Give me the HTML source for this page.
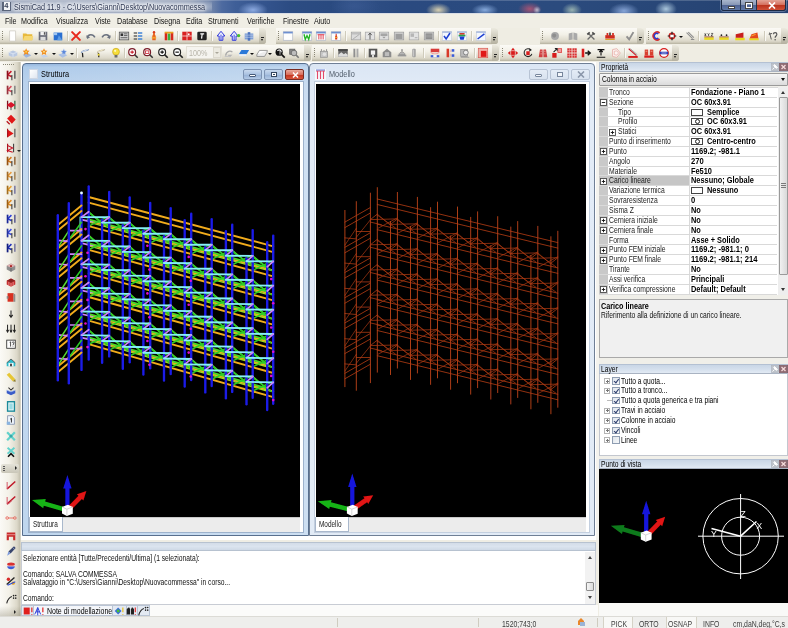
<!DOCTYPE html>
<html><head><meta charset="utf-8"><title>SismiCad</title>
<style>
*{box-sizing:border-box;margin:0;padding:0}
html,body{width:788px;height:628px;overflow:hidden;background:#f0efe8;font-family:"Liberation Sans",sans-serif;font-size:9px;color:#000}
.abs{position:absolute}
#root{position:absolute;left:0;top:0;width:788px;height:628px;overflow:hidden;background:#efede4;filter:blur(.35px)}
/* title bar */
#title{left:0;top:0;width:788px;height:13px;background:linear-gradient(90deg,#a5afc2 0px,#a3adc1 120px,#98a4ba 190px,#7a8cae 208px,#4d6aa0 222px,#3f5f98 235px,#34548e 262px,#2c4c83 290px,#2a4a80 330px,#305086 350px,#2a4a80 400px,#2b4b7e 560px,#274575 700px,#24406e 788px);overflow:hidden}
#title .t{left:14px;top:1.5px;font-size:9.2px;color:#2a3450;white-space:nowrap;text-shadow:0 0 3px #fff,0 0 4px #fff,0 0 5px #fff;transform-origin:0 50%;transform:scaleX(.79)}
/* menu */
#menu{left:0;top:14px;width:788px;height:14px;background:#f0eee5}
#menu span{position:absolute;top:2px;font-size:9.3px;white-space:nowrap;color:#111;transform-origin:0 50%;transform:scaleX(.77)}
/* toolbars */
.strip{position:absolute;height:16px;background:linear-gradient(180deg,#fbfaf6 0%,#f3f1e8 40%,#dcd8c9 82%,#c6c2b1 94%,#b3af9d 100%);border-radius:0 3px 3px 0}
.strip .end{position:absolute;right:0;top:0;width:7px;height:16px;background:linear-gradient(180deg,#eceadf,#b5b1a0);border-radius:0 3px 3px 0}
.strip .end:after{content:"";position:absolute;left:2px;top:11px;border-left:1.7px solid transparent;border-right:1.7px solid transparent;border-top:2.2px solid #111}
.strip .end:before{content:"";position:absolute;left:2px;top:8.5px;width:3.4px;height:1px;background:#222}
.grip{position:absolute;top:3px;width:1px;height:10px;background:repeating-linear-gradient(180deg,#8a8776 0 1px,transparent 1px 2px)}
.sep{position:absolute;top:3px;width:1px;height:10px;background:#cfcbbb;box-shadow:1px 0 0 #faf9f5}
.ic{position:absolute;width:12px;height:12px;top:2px;filter:blur(.3px)}
.ic svg{position:absolute;left:0;top:0;width:12px;height:12px;overflow:visible}
.dd{position:absolute;top:8px;width:0;height:0;border-left:2px solid transparent;border-right:2px solid transparent;border-top:2.5px solid #111}
/* left toolbar */
#ltb{left:0;top:62px;width:21px;height:555px;background:linear-gradient(180deg,rgba(0,0,0,0) 0,rgba(0,0,0,0) 544px,rgba(120,115,95,.35) 555px),linear-gradient(90deg,#fbfaf6 0px,#f3f1e8 9px,#dcd8c9 17px,#c4c0af 20px,#e9e7de 21px)}
#ltb .ic{left:5px}
/* mdi */
#mdi{left:21px;top:62px;width:577px;height:478px;background:#fff}
.win{position:absolute;border:1px solid #5a6f8a;border-radius:4px 4px 0 0}
.win .cap{position:absolute;left:0;top:0;right:0;height:20px}
.win .cap .tt{position:absolute;left:18px;top:5px;font-size:9.2px;white-space:nowrap}
.win .client{position:absolute;background:#000;overflow:hidden}
.win .inner{position:absolute;background:#fff;border:1px solid #8fa4bf}
.wbtn{position:absolute;top:5px;height:10.5px;width:18.5px;border:1px solid #7d93b3;border-radius:2px}
.tab{position:absolute;background:#fff;font-size:8.6px;border:1px solid #a9b8cc;border-top:none}
/* panels */
.phead{position:absolute;height:10px;background:linear-gradient(180deg,#c9d6e6,#d6e1ee 60%,#e2eaf4);border:1px solid #b4c1d3;border-bottom-color:#a9b3c2;font-size:8.6px;line-height:8px;padding-left:1px;white-space:nowrap}
.phead i{position:absolute;top:0px;width:8px;height:8px;font-style:normal}
.prow{position:absolute;left:0;width:178px;height:9.84px;border-bottom:1px solid #d9d9d9;font-size:8.6px;line-height:9px;white-space:nowrap}
.prow .n{position:absolute;left:10px;top:0;color:#222;transform-origin:0 50%;transform:scaleX(.79)}
.prow .v{position:absolute;left:92px;top:0;font-weight:bold;color:#000;transform-origin:0 50%;transform:scaleX(.86)}
.prow .e{position:absolute;left:2px;top:2px;width:6px;height:6px;border:1px solid #555;background:#fff}
.prow .e:before{content:"";position:absolute;left:1px;top:1.5px;width:2px;height:1px;background:#000}
.prow .e.p:after{content:"";position:absolute;left:1.5px;top:1px;width:1px;height:2px;background:#000}
.prow .bx{position:absolute;left:92px;top:1px;width:12px;height:7px;border:1px solid #444;background:#fff}
.lrow{position:absolute;left:0;height:10px;font-size:8.6px;line-height:10px;white-space:nowrap}
.lrow .e{position:absolute;left:4px;top:2.5px;width:6px;height:6px;border:1px solid #b4b4b4;background:#fff}
.lrow .e:before{content:"";position:absolute;left:0.5px;top:1.5px;width:3px;height:1px;background:#777}
.lrow .e:after{content:"";position:absolute;left:1.5px;top:0.5px;width:1px;height:3px;background:#777}
.lrow .cb{position:absolute;left:12px;top:1.5px;width:7.5px;height:7.5px;border:1px solid #8e9db2;background:linear-gradient(135deg,#dfe5ec,#f6f8fa)}
.lrow .cb.c:after{content:"";position:absolute;left:1.5px;top:0px;width:1.8px;height:3.6px;border-right:1.2px solid #2c3c6c;border-bottom:1.2px solid #2c3c6c;transform:rotate(38deg)}
.lrow .t{position:absolute;left:20.8px;top:0;transform-origin:0 50%;transform:scaleX(.775)}
/* status */
#status{left:0;top:616px;width:788px;height:12px;background:#eeeeec;border-top:1px solid #dcdbd6;font-size:8.6px}
#status span{position:absolute;top:1.5px;color:#3c3c3c;white-space:nowrap;transform-origin:0 50%;transform:scaleX(.8)}

.sx{display:inline-block;white-space:nowrap;transform-origin:0 50%;transform:scaleX(.78)}
.sxb{display:inline-block;white-space:nowrap;transform-origin:0 50%;transform:scaleX(.86);font-weight:bold}
.win .cap .tt{transform-origin:0 50%;transform:scaleX(.8)}
.tab span{display:inline-block;transform-origin:0 50%;transform:scaleX(.75);color:#222}

</style></head>
<body>
<div id="root">
<svg width="0" height="0" style="position:absolute"><defs><filter id="soft" x="-10%" y="-10%" width="120%" height="120%"><feGaussianBlur stdDeviation="0.45"/></filter><filter id="soft2" x="-5%" y="-5%" width="110%" height="110%"><feGaussianBlur stdDeviation="0.4"/></filter><filter id="soft3" x="-5%" y="-5%" width="110%" height="110%"><feGaussianBlur stdDeviation="0.3"/></filter></defs></svg>
<!-- TITLE BAR -->
<div id="title" class="abs">
  <div class="abs" style="left:238px;top:2px;width:30px;height:16px;background:radial-gradient(ellipse at center,rgba(140,170,225,1),rgba(135,165,220,0) 70%)"></div>
  <div class="abs" style="left:330px;top:-4px;width:50px;height:20px;background:radial-gradient(ellipse at center,rgba(70,100,160,.35),rgba(70,100,160,0) 70%)"></div>
  <div class="abs" style="left:426px;top:3px;width:25px;height:14px;background:radial-gradient(ellipse at center,rgba(225,215,180,.95),rgba(225,215,180,0) 70%)"></div>
  <div class="abs" style="left:472px;top:4px;width:26px;height:12px;background:radial-gradient(ellipse at center,rgba(145,180,230,.9),rgba(145,180,230,0) 72%)"></div>
  <div class="abs" style="left:518px;top:2px;width:24px;height:14px;background:radial-gradient(ellipse at center,rgba(185,85,115,.85),rgba(185,85,115,0) 70%)"></div>
  <div class="abs" style="left:533px;top:6px;width:8px;height:8px;background:radial-gradient(ellipse at center,rgba(230,230,240,.7),rgba(230,230,240,0) 70%)"></div>
  <div class="abs" style="left:562px;top:3px;width:20px;height:14px;background:radial-gradient(ellipse at center,rgba(170,195,185,.85),rgba(170,195,185,0) 70%)"></div>
  <div class="abs" style="left:609px;top:3px;width:30px;height:16px;background:radial-gradient(ellipse at center,rgba(135,165,215,1),rgba(125,155,205,0) 70%)"></div>
  <div class="abs" style="left:655px;top:1px;width:22px;height:16px;background:radial-gradient(ellipse at center,rgba(170,198,220,1),rgba(150,180,205,0) 70%)"></div>
  <div class="abs" style="left:0;top:0;width:788px;height:1px;background:rgba(255,255,255,.18)"></div>
  <div class="abs" style="left:8px;top:1px;width:204px;height:11px;background:radial-gradient(ellipse at center,rgba(222,227,236,.75) 0%,rgba(205,212,224,.5) 60%,rgba(190,198,213,0) 100%)"></div>
  <!-- app icon -->
  <div class="abs" style="left:2px;top:2px;width:9px;height:9px;background:#59647a"></div>
  <div class="abs" style="left:3.5px;top:2px;width:6px;height:8px;background:#f2f4f8"></div>
  <div class="abs" style="left:4.2px;top:2.2px;color:#39435a;font-size:7.5px;line-height:8px;font-weight:bold">4</div>
  <div class="t abs">SismiCad 11.9 - C:\Users\Gianni\Desktop\Nuovacommessa</div>
  <!-- caption buttons -->
  <div class="abs" style="left:721px;top:0;width:65px;height:10.5px;border:1px solid #1c2a44;border-top:none;border-radius:0 0 3px 3px;overflow:hidden;box-shadow:0 0 0 1px rgba(200,215,240,.35)">
    <div class="abs" style="left:0;top:0;width:19px;height:11px;background:linear-gradient(180deg,#a9b6cd 0%,#8797b5 45%,#506494 50%,#6480ae 100%);border-right:1px solid #26344d"></div>
    <div class="abs" style="left:19px;top:0;width:16px;height:11px;background:linear-gradient(180deg,#a9b6cd 0%,#8797b5 45%,#506494 50%,#6480ae 100%);border-right:1px solid #26344d"></div>
    <div class="abs" style="left:35px;top:0;width:30px;height:11px;background:linear-gradient(180deg,#e3a496 0%,#d46e5c 45%,#bb341e 50%,#d4573d 100%)"></div>
    <div class="abs" style="left:6px;top:6px;width:7px;height:2.5px;background:#fff;border:0.5px solid #444"></div>
    <div class="abs" style="left:24px;top:2.5px;width:6px;height:5px;border:1.3px solid #fff;outline:0.5px solid #444"></div>
    <svg class="abs" style="left:46px;top:2px" width="8" height="7" viewBox="0 0 8 7"><path d="M1,0.5L7,6.5M7,0.5L1,6.5" stroke="#fff" stroke-width="1.7"/></svg>
  </div>
</div>
<div class="abs" style="left:0;top:13px;width:788px;height:1px;background:#d9dde5"></div>
<!-- MENU -->
<div id="menu" class="abs">
<span style="left:4.5px">File</span>
<span style="left:20.5px">Modifica</span>
<span style="left:56px">Visualizza</span>
<span style="left:94.5px">Viste</span>
<span style="left:116.5px">Database</span>
<span style="left:153.5px">Disegna</span>
<span style="left:186px">Edita</span>
<span style="left:208px">Strumenti</span>
<span style="left:246.5px">Verifiche</span>
<span style="left:283px">Finestre</span>
<span style="left:313.5px">Aiuto</span>
</div>
<!-- TOOLBARS -->
<div class="abs" style="left:0;top:28px;width:788px;height:34px;background:#efede3"></div>
<div class="strip" style="left:0px;top:28px;width:266px">
<div class="grip" style="left:2px"></div>
<div class="ic" style="left:6.5px;top:2px"><svg viewBox="0 0 14 14"><path d="M3,1H10V13H3Z" fill="#fff" stroke="#c9c6bb" stroke-width="0.8"/></svg></div>
<div class="ic" style="left:21.6px;top:2px"><svg viewBox="0 0 14 14"><path d="M1,4H5L6,5H12V12H1Z" fill="#e8b93c"/><path d="M1,12L3,7H13L12,12Z" fill="#f6d873"/></svg></div>
<div class="ic" style="left:36.7px;top:2px"><svg viewBox="0 0 14 14"><path d="M2,2H12V12H2Z" fill="#6c6e7a"/><rect x="4" y="2" width="6" height="4" fill="#f2f2f2"/><rect x="4" y="8" width="6" height="4" fill="#dcdcdc"/><rect x="8" y="2.5" width="1.5" height="3" fill="#555"/></svg></div>
<div class="ic" style="left:51.8px;top:2px"><svg viewBox="0 0 14 14"><rect x="2" y="3" width="10" height="9" fill="#2a6fd0"/><rect x="2" y="3" width="4" height="3" fill="#9ec4f0"/><path d="M8,6L12,12H6Z" fill="#5d9be4"/></svg></div>
<div class="sep" style="left:67.0px"></div>
<div class="ic" style="left:70.0px;top:2px"><svg viewBox="0 0 14 14"><path d="M2.5,2.5L11.5,11.5M11.5,2.5L2.5,11.5" stroke="#e8281c" stroke-width="2.4" stroke-linecap="round"/></svg></div>
<div class="ic" style="left:85.0px;top:2px"><svg viewBox="0 0 14 14"><path d="M2.5,9C3.5,4.5 9.5,4.5 11.5,8.5" stroke="#6b7280" stroke-width="1.8" fill="none"/><path d="M1.5,6L2.5,10.5L6,8.5Z" fill="#6b7280"/></svg></div>
<div class="ic" style="left:100.0px;top:2px"><svg viewBox="0 0 14 14"><path d="M11.5,9C10.5,4.5 4.5,4.5 2.5,8.5" stroke="#6b7280" stroke-width="1.8" fill="none"/><path d="M12.5,6L11.5,10.5L8,8.5Z" fill="#6b7280"/></svg></div>
<div class="sep" style="left:115.0px"></div>
<div class="ic" style="left:118.0px;top:2px"><svg viewBox="0 0 14 14"><rect x="1.5" y="2.5" width="11" height="9" fill="#d4d4d4" stroke="#555" stroke-width="0.9"/><rect x="3" y="4" width="3" height="3" fill="#333"/><path d="M7,4.5H11M7,6.5H11M3,9H11" stroke="#444" stroke-width="0.9"/></svg></div>
<div class="ic" style="left:132.4px;top:2px"><svg viewBox="0 0 14 14"><path d="M2,3.5H6M2,7H6M2,10.5H6" stroke="#222" stroke-width="1.4"/><path d="M7,3.5H12M7,7H12M7,10.5H12" stroke="#3f83d8" stroke-width="1.6"/></svg></div>
<div class="ic" style="left:148.0px;top:2px"><svg viewBox="0 0 14 14"><path d="M5,12V7L6,5V2H8V5L9,7V12Z" fill="#e8641c"/><rect x="4.5" y="8" width="5" height="2" fill="#f2a032"/><circle cx="7" cy="2.5" r="1.4" fill="#d63a1c"/></svg></div>
<div class="ic" style="left:162.6px;top:2px"><svg viewBox="0 0 14 14"><rect x="2" y="3" width="3" height="9" fill="#d8281c"/><rect x="5.5" y="4" width="3" height="8" fill="#3bb33b"/><rect x="9" y="3" width="3" height="9" fill="#d8281c"/><rect x="2" y="2" width="10" height="2" fill="#e8a020"/></svg></div>
<div class="sep" style="left:177.0px"></div>
<div class="ic" style="left:181.0px;top:2px"><svg viewBox="0 0 14 14"><rect x="1.5" y="2" width="11" height="10" fill="#d82020"/><path d="M7,2V12M1.5,7H12.5" stroke="#fff" stroke-width="0.8"/><rect x="8" y="4" width="2" height="2" fill="#fff"/></svg></div>
<div class="ic" style="left:196.0px;top:2px"><svg viewBox="0 0 14 14"><rect x="1.5" y="2" width="11" height="10" rx="1.5" fill="#222"/><path d="M5,4.5H9.5M7.2,4.5L6.5,10" stroke="#fff" stroke-width="1.4"/></svg></div>
<div class="sep" style="left:210.5px"></div>
<div class="ic" style="left:214.5px;top:2px"><svg viewBox="0 0 14 14"><path d="M7,1.5L11.5,7H9.2V12H4.8V7H2.5Z" fill="#e6ebff" stroke="#2a32d8" stroke-width="1.1"/><path d="M7,5.5V12" stroke="#2a32d8" stroke-width="1"/></svg></div>
<div class="ic" style="left:228.7px;top:2px"><svg viewBox="0 0 14 14"><path d="M6,1.5L10.5,7H8.2V12H3.8V7H1.5Z" fill="#e6ebff" stroke="#2a32d8" stroke-width="1.1"/><path d="M6,5.5V12" stroke="#2a32d8" stroke-width="1"/><circle cx="11.3" cy="6.5" r="1.9" fill="#46c02a"/></svg></div>
<div class="ic" style="left:243.0px;top:2px"><svg viewBox="0 0 14 14"><rect x="2" y="4" width="10" height="7" fill="#7f9fd6"/><rect x="5.5" y="2.5" width="3" height="10" fill="#4d74be"/><path d="M2,6H12M2,8.5H12" stroke="#c9d7ef" stroke-width="0.7"/></svg></div>
<div class="end"></div>
</div>
<div class="strip" style="left:276px;top:28px;width:222px">
<div class="grip" style="left:2px"></div>
<div class="ic" style="left:5.7px;top:2px"><svg viewBox="0 0 14 14"><rect x="1.5" y="2" width="11" height="10" fill="#fdfdfd" stroke="#b3b9c6" stroke-width="0.8"/><rect x="1.5" y="2" width="11" height="2" fill="#6d8fd0"/></svg></div>
<div class="ic" style="left:25.0px;top:2px"><svg viewBox="0 0 14 14"><rect x="1.5" y="2" width="11" height="10" fill="#fdfdfd" stroke="#b3b9c6" stroke-width="0.8"/><rect x="1.5" y="2" width="11" height="2" fill="#6d8fd0"/><path d="M3.5,5L5,11L7,6.5L9,11L10.5,5" stroke="#22b422" stroke-width="1.6" fill="none"/></svg></div>
<div class="ic" style="left:39.0px;top:2px"><svg viewBox="0 0 14 14"><rect x="1.5" y="2" width="11" height="10" fill="#fdfdfd" stroke="#b3b9c6" stroke-width="0.8"/><rect x="1.5" y="2" width="11" height="2" fill="#6d8fd0"/><path d="M3,5.5H11M4.5,5.5V11M7,5.5V11M9.5,5.5V11" stroke="#e03a4a" stroke-width="1.1" fill="none"/></svg></div>
<div class="ic" style="left:54.0px;top:2px"><svg viewBox="0 0 14 14"><rect x="1.5" y="2" width="11" height="10" fill="#fdfdfd" stroke="#b3b9c6" stroke-width="0.8"/><rect x="1.5" y="2" width="11" height="2" fill="#6d8fd0"/><path d="M6,11V7.5L6.6,6V4.5H7.8V6L8.4,7.5V11Z" fill="#d8301c"/><rect x="5.8" y="8" width="2.8" height="1.4" fill="#efa52e"/></svg></div>
<div class="sep" style="left:68.7px"></div>
<div class="ic" style="left:73.6px;top:2px"><svg viewBox="0 0 14 14"><rect x="1.5" y="2.5" width="11" height="9" fill="#dcdcdc" stroke="#9b9b9b" stroke-width="0.8"/><path d="M2,4.5H12M3,11L11,5" stroke="#a9a9a9" stroke-width="1"/></svg></div>
<div class="ic" style="left:88.0px;top:2px"><svg viewBox="0 0 14 14"><rect x="1.5" y="2.5" width="11" height="9" fill="#e4e4e4" stroke="#a3a3a3" stroke-width="0.8"/><path d="M7,11V4M5,6L7,3.5L9,6" stroke="#555" stroke-width="1.1" fill="none"/></svg></div>
<div class="ic" style="left:102.0px;top:2px"><svg viewBox="0 0 14 14"><rect x="1.5" y="2.5" width="11" height="9" fill="#dedede" stroke="#a3a3a3" stroke-width="0.8"/><rect x="3" y="4" width="8" height="3" fill="#a5a5a5"/><path d="M5,8L7,10L9,8" fill="#9a9a9a"/></svg></div>
<div class="ic" style="left:117.4px;top:2px"><svg viewBox="0 0 14 14"><rect x="1.5" y="2.5" width="11" height="9" fill="#cfcfcf" stroke="#9a9a9a" stroke-width="0.8"/><rect x="3" y="4.5" width="8" height="6" fill="#9d9d9d"/></svg></div>
<div class="ic" style="left:131.6px;top:2px"><svg viewBox="0 0 14 14"><rect x="1.5" y="2.5" width="11" height="9" fill="#e2e2e2" stroke="#a7a7a7" stroke-width="0.8"/><rect x="3" y="4" width="4" height="4" fill="#b5b5b5"/><path d="M8,9H11" stroke="#a5a5a5"/></svg></div>
<div class="ic" style="left:146.7px;top:2px"><svg viewBox="0 0 14 14"><rect x="1.5" y="2.5" width="11" height="9" fill="#cdcdcd" stroke="#9a9a9a" stroke-width="0.8"/><rect x="3" y="4" width="8" height="6.5" fill="#8d8d8d"/><path d="M3,6H11M3,8H11" stroke="#b9b9b9" stroke-width="0.6"/></svg></div>
<div class="sep" style="left:162.0px"></div>
<div class="ic" style="left:165.0px;top:2px"><svg viewBox="0 0 14 14"><rect x="1.5" y="2" width="11" height="10" fill="#f4f7fd" stroke="#c0c9da" stroke-width="0.7"/><path d="M1.5,2.5H12.5" stroke="#7c98d0" stroke-width="1"/><path d="M3.5,7L6,10.5L10.5,3.5" stroke="#1d3fd0" stroke-width="1.8" fill="none"/></svg></div>
<div class="ic" style="left:180.0px;top:2px"><svg viewBox="0 0 14 14"><rect x="1.5" y="2" width="11" height="10" fill="#f4f7fd" stroke="#c0c9da" stroke-width="0.7"/><path d="M1.5,2.5H12.5" stroke="#7c98d0" stroke-width="1"/><rect x="4" y="3.5" width="6" height="2" fill="#d43a2c"/><rect x="3" y="5.5" width="8" height="2" fill="#2aa44a"/><path d="M4,7.5H10L9,11.5H5Z" fill="#1d3fd0"/></svg></div>
<div class="sep" style="left:194.5px"></div>
<div class="ic" style="left:199.4px;top:2px"><svg viewBox="0 0 14 14"><rect x="1.5" y="2" width="11" height="10" fill="#f4f7fd" stroke="#c0c9da" stroke-width="0.7"/><path d="M1.5,2.5H12.5" stroke="#7c98d0" stroke-width="1"/><path d="M3,10.5L11,4.5" stroke="#1d3fd0" stroke-width="1.8"/></svg></div>
<div class="end"></div>
</div>
<div class="strip" style="left:540px;top:28px;width:104px">
<div class="grip" style="left:2px"></div>
<div class="ic" style="left:8.5px;top:2px"><svg viewBox="0 0 14 14"><circle cx="7" cy="7" r="4.6" fill="#a9a9a9"/><circle cx="6" cy="6.5" r="2.4" fill="#8e8e8e"/></svg></div>
<div class="ic" style="left:27.0px;top:2px"><svg viewBox="0 0 14 14"><path d="M2,4L6.5,3V11L2,12ZM7.5,3L12,4V12L7.5,11Z" fill="#a9a9a9"/></svg></div>
<div class="ic" style="left:45.4px;top:2px"><svg viewBox="0 0 14 14"><path d="M3,11L10,4M11,11L4,4" stroke="#6c6c6c" stroke-width="1.5"/><path d="M2,4.5L5,2L6,3.5L3.5,6ZM12,4.5L9,2L8,3.5L10.5,6Z" fill="#4a4a4a"/></svg></div>
<div class="ic" style="left:63.5px;top:2px"><svg viewBox="0 0 14 14"><rect x="1.5" y="6" width="11" height="4" fill="#d02a20"/><rect x="3" y="3.5" width="2" height="3" fill="#d02a20"/><rect x="6" y="3" width="2" height="3.5" fill="#444"/><rect x="9.5" y="3.5" width="2" height="3" fill="#d02a20"/><path d="M1.5,11H12.5" stroke="#d8a020" stroke-width="1.2"/></svg></div>
<div class="ic" style="left:83.8px;top:2px"><svg viewBox="0 0 14 14"><path d="M3,7.5L6,11L11,2.5" stroke="#8f8f8f" stroke-width="2.2" fill="none"/></svg></div>
<div class="end"></div>
</div>
<div class="strip" style="left:646px;top:28px;width:142px">
<div class="grip" style="left:2px"></div>
<div class="ic" style="left:5.0px;top:2px"><svg viewBox="0 0 14 14"><path d="M10,3.5A4.5,4.5 0 1 0 10,10.5" stroke="#d42a2a" stroke-width="2" fill="none"/><path d="M8.5,4.5A3,3 0 1 0 8.5,9.5" stroke="#2a3cd4" stroke-width="1.6" fill="none"/></svg></div>
<div class="ic" style="left:19.6px;top:2px"><svg viewBox="0 0 14 14"><circle cx="7" cy="7" r="4" fill="#d02020"/><path d="M2,7H12M7,2V12" stroke="#222" stroke-width="1.4"/><rect x="5" y="5.5" width="4" height="3" fill="#fff"/></svg></div>
<div class="dd" style="left:33.0px"></div>
<div class="ic" style="left:38.0px;top:2px"><svg viewBox="0 0 14 14"><path d="M3,3L10,10M5,2.5L11.5,9M8,11H12" stroke="#8d8d8d" stroke-width="1.2" fill="none"/></svg></div>
<div class="sep" style="left:52.0px"></div>
<div class="ic" style="left:57.0px;top:2px"><svg viewBox="0 0 14 14"><rect x="1.5" y="8.5" width="11" height="3" fill="#e8d820"/><path d="M2,4L3.5,7M3.5,4L2,7M5.5,4L6.5,5.5L7.5,4M6.5,5.5V7M9.5,4H11.5L9.5,7H11.5" stroke="#222" stroke-width="0.8" fill="none"/><path d="M1.5,8H12.5" stroke="#8a2a1a" stroke-width="0.8"/></svg></div>
<div class="ic" style="left:72.0px;top:2px"><svg viewBox="0 0 14 14"><rect x="1.5" y="8.5" width="11" height="3" fill="#e8d820"/><circle cx="4" cy="6" r="1" fill="#222"/><circle cx="10" cy="6" r="1" fill="#222"/><path d="M1.5,8H12.5" stroke="#8a2a1a" stroke-width="0.8"/></svg></div>
<div class="ic" style="left:87.6px;top:2px"><svg viewBox="0 0 14 14"><rect x="1.5" y="9" width="11" height="3" fill="#e8d820"/><path d="M2,9V5L11,3V9Z" fill="#c8201c"/></svg></div>
<div class="ic" style="left:102.0px;top:2px"><svg viewBox="0 0 14 14"><rect x="1.5" y="9.5" width="11" height="2.5" fill="#e8d820"/><path d="M2,9.5L4,5L11,3L12,9.5Z" fill="#e4481c"/><path d="M4,7L9,5" stroke="#f6a02a" stroke-width="1.2"/></svg></div>
<div class="sep" style="left:117.5px"></div>
<div class="ic" style="left:121.0px;top:2px"><svg viewBox="0 0 14 14"><path d="M3,3L5,11M2,5L6,4" stroke="#444" stroke-width="1"/><path d="M7.5,5C7.5,2.5 11.5,2.5 11.5,5C11.5,7 9.5,7 9.5,9" stroke="#555" stroke-width="1.4" fill="none"/><circle cx="9.5" cy="11.3" r="0.9" fill="#555"/></svg></div>
<div class="end"></div>
</div>
<div class="strip" style="left:0px;top:45px;width:311px">
<div class="grip" style="left:2px"></div>
<div class="ic" style="left:7.4px;top:2px"><svg viewBox="0 0 14 14"><path d="M2,6L7,4L12,6V10L7,12L2,10Z" fill="#b9c8e2"/><path d="M2,6L7,8L12,6M7,8V12" stroke="#e6edf8" stroke-width="0.8" fill="none"/></svg></div>
<div class="ic" style="left:20.8px;top:2px"><svg viewBox="0 0 14 14"><path d="M2,9L8,7L12,10L6,12.5Z" fill="#9db5dd"/><path d="M6,1.5L7.2,4.2L10,4.5L8,6.5L8.6,9.2L6,7.8L3.4,9.2L4,6.5L2,4.5L4.8,4.2Z" fill="#f08a1c"/><circle cx="6" cy="5.5" r="1.2" fill="#f8d24a"/></svg></div>
<div class="dd" style="left:34.0px"></div>
<div class="ic" style="left:37.5px;top:2px"><svg viewBox="0 0 14 14"><path d="M3,10L9,9L12,11L6,12.5Z" fill="#c2d2ec"/><path d="M7,1.5L8.2,4.2L11,4.5L9,6.5L9.6,9.2L7,7.8L4.4,9.2L5,6.5L3,4.5L5.8,4.2Z" fill="#f08a1c"/><circle cx="7" cy="5.5" r="1.2" fill="#f8e48a"/></svg></div>
<div class="dd" style="left:51.6px"></div>
<div class="ic" style="left:56.8px;top:2px"><svg viewBox="0 0 14 14"><path d="M1.5,9L7,7L12,9.5L6.5,12.5Z" fill="#a9bfe4"/><path d="M8,2L9,4.5L11.5,4.8L9.7,6.6L10.2,9L8,7.8L5.8,9L6.3,6.6L4.5,4.8L7,4.5Z" fill="#5a86d8" stroke="#dbe6f8" stroke-width="0.5"/></svg></div>
<div class="dd" style="left:70.0px"></div>
<div class="sep" style="left:76.0px"></div>
<div class="ic" style="left:79.4px;top:2px"><svg viewBox="0 0 14 14"><path d="M3,7C3,3 11,5 11,2.5" stroke="#7d93b8" stroke-width="1.6" fill="none"/><path d="M4,7L4.5,12" stroke="#222" stroke-width="1.5"/><path d="M3,6L10,3" stroke="#d6e2f3" stroke-width="1.2"/></svg></div>
<div class="ic" style="left:94.5px;top:2px"><svg viewBox="0 0 14 14"><path d="M3,7C3,3 11,5 11,2.5" stroke="#b9b09a" stroke-width="1.6" fill="none"/><path d="M4,7L4.5,12" stroke="#222" stroke-width="1.5"/><path d="M3,6L10,3" stroke="#f0e8c8" stroke-width="1.2"/><circle cx="4.3" cy="9" r="1.3" fill="#e8d23a"/></svg></div>
<div class="ic" style="left:109.6px;top:2px"><svg viewBox="0 0 14 14"><circle cx="7" cy="5.5" r="4" fill="#f6de3a" stroke="#c8a61c" stroke-width="0.8"/><rect x="5.3" y="9.3" width="3.4" height="3" fill="#6c6c6c"/><circle cx="6" cy="4.5" r="1.3" fill="#fff8c0"/></svg></div>
<div class="sep" style="left:124.0px"></div>
<div class="ic" style="left:127.4px;top:2px"><svg viewBox="0 0 14 14"><circle cx="6" cy="6" r="4" fill="#fff" stroke="#7a1c2a" stroke-width="1.4"/><path d="M9,9L12.5,12.5" stroke="#333" stroke-width="1.8"/><path d="M4,6H8M6,4V8" stroke="#c81c2a" stroke-width="1.3"/></svg></div>
<div class="ic" style="left:141.6px;top:2px"><svg viewBox="0 0 14 14"><circle cx="6" cy="6" r="4" fill="#fff" stroke="#7a1c2a" stroke-width="1.4"/><path d="M9,9L12.5,12.5" stroke="#333" stroke-width="1.8"/><rect x="4" y="4.5" width="4" height="3" fill="none" stroke="#c81c2a" stroke-width="0.9"/></svg></div>
<div class="ic" style="left:156.7px;top:2px"><svg viewBox="0 0 14 14"><circle cx="6" cy="6" r="4" fill="#fff" stroke="#222" stroke-width="1.4"/><path d="M9,9L12.5,12.5" stroke="#222" stroke-width="1.9"/><path d="M4,6H8M6,4V8" stroke="#111" stroke-width="1.4"/></svg></div>
<div class="ic" style="left:171.8px;top:2px"><svg viewBox="0 0 14 14"><circle cx="6" cy="6" r="4" fill="#fff" stroke="#222" stroke-width="1.4"/><path d="M9,9L12.5,12.5" stroke="#222" stroke-width="1.9"/><path d="M4,6H8" stroke="#111" stroke-width="1.4"/></svg></div>
<div class="abs" style="left:186px;top:1px;width:36px;height:13px;background:#f5f4ef;border:1px solid #e3e0d6"></div><div class="abs" style="left:188.5px;top:3px;font-size:9px;color:#b8b5aa;transform-origin:0 50%;transform:scaleX(.8)">100%</div><div class="abs" style="left:213px;top:2px;width:8px;height:11px;background:#eceae1;border:1px solid #dcd9ce"></div><div class="dd" style="left:215px;top:7px;border-top-color:#a9a69a"></div>
<div class="ic" style="left:223.0px;top:2px"><svg viewBox="0 0 14 14"><path d="M3,10C4,4 9,4 11,6" stroke="#a9a9a9" stroke-width="1.5" fill="none"/><path d="M5,9L8,12L11,9Z" fill="#b5b5b5"/><path d="M2,11H9" stroke="#c3c3c3" stroke-width="1.2"/></svg></div>
<div class="ic" style="left:238.0px;top:2px"><svg viewBox="0 0 14 14"><path d="M4,3.5H13L10,8.5H1Z" fill="#2a78d8"/><path d="M1,8.5H10L9.5,10.5H1.5Z" fill="#e8eef8"/></svg></div>
<div class="dd" style="left:250.0px"></div>
<div class="ic" style="left:255.8px;top:2px"><svg viewBox="0 0 14 14"><path d="M4,4H13L10,9H1Z" fill="#fdfdfd" stroke="#777" stroke-width="0.8"/><path d="M1,9V11H10L13,6V4" stroke="#777" stroke-width="0.8" fill="#ececec"/></svg></div>
<div class="dd" style="left:268.0px"></div>
<div class="ic" style="left:274.0px;top:2px"><svg viewBox="0 0 14 14"><circle cx="6" cy="6" r="4.2" fill="#111"/><path d="M4,4.5A2.5,2.5 0 0 1 8.5,6" stroke="#fff" stroke-width="1.2" fill="none"/><path d="M9,9L12.5,12.5" stroke="#111" stroke-width="2"/><path d="M7,3V9" stroke="#fff" stroke-width="0.8"/></svg></div>
<div class="ic" style="left:288.4px;top:2px"><svg viewBox="0 0 14 14"><rect x="2" y="2.5" width="6" height="6" fill="#888" stroke="#555" stroke-width="0.8"/><circle cx="7" cy="7" r="3.3" fill="#bdbdbd" stroke="#666" stroke-width="1"/><path d="M9.5,9.5L12.5,12.5" stroke="#777" stroke-width="1.8"/></svg></div>
<div class="end"></div>
</div>
<div class="strip" style="left:312px;top:45px;width:187px">
<div class="grip" style="left:2px"></div>
<div class="ic" style="left:5.7px;top:2px"><svg viewBox="0 0 14 14"><rect x="3" y="5" width="8" height="7" fill="#c5c5c5" stroke="#8f8f8f" stroke-width="0.8"/><path d="M4,5V2.5M10,5V2.5M7,5V3.5" stroke="#8f8f8f" stroke-width="1.1"/><circle cx="7.5" cy="8.5" r="2" fill="#e2e2e2"/></svg></div>
<div class="sep" style="left:20.5px"></div>
<div class="ic" style="left:25.0px;top:2px"><svg viewBox="0 0 14 14"><rect x="1.5" y="2.5" width="11" height="9" fill="#666"/><path d="M1.5,9L5,6L8,8.5L10,7L12.5,9V11.5H1.5Z" fill="#dcdcdc"/><rect x="1.5" y="2.5" width="11" height="2" fill="#444"/></svg></div>
<div class="ic" style="left:37.6px;top:2px"><svg viewBox="0 0 14 14"><rect x="4" y="2" width="2.2" height="10" fill="#8f8f8f"/><rect x="7.6" y="2" width="2.2" height="10" fill="#a9a9a9"/></svg></div>
<div class="sep" style="left:51.5px"></div>
<div class="ic" style="left:54.5px;top:2px"><svg viewBox="0 0 14 14"><rect x="2" y="2" width="10" height="10" fill="#555"/><rect x="4.5" y="4" width="5" height="5" fill="#f4f4f4"/><rect x="6" y="9" width="2" height="3" fill="#f4f4f4"/></svg></div>
<div class="ic" style="left:68.8px;top:2px"><svg viewBox="0 0 14 14"><path d="M2,6L7,2L12,6V12H2Z" fill="#8b8b8b"/><rect x="4.5" y="6" width="5" height="4.5" fill="#bdbdbd"/></svg></div>
<div class="ic" style="left:84.0px;top:2px"><svg viewBox="0 0 14 14"><path d="M2,11H12V9H2Z" fill="#9a9a9a"/><path d="M3.5,9C3.5,5 10.5,5 10.5,9Z" fill="#b5b5b5" stroke="#7d7d7d" stroke-width="0.7"/><rect x="6.3" y="2.5" width="1.4" height="3" fill="#7d7d7d"/></svg></div>
<div class="ic" style="left:96.4px;top:2px"><svg viewBox="0 0 14 14"><rect x="5" y="2" width="4" height="10" rx="1.2" fill="#9f9f9f"/><rect x="6" y="3" width="1.2" height="8" fill="#cfcfcf"/></svg></div>
<div class="sep" style="left:111.0px"></div>
<div class="ic" style="left:116.5px;top:2px"><svg viewBox="0 0 14 14"><rect x="2" y="2" width="10" height="4" fill="#d83a3a"/><path d="M2,6C4,9 10,9 12,6" stroke="#f0a0a0" stroke-width="1.2" fill="none"/><rect x="2" y="9.5" width="10" height="2.5" fill="#3a5cd8"/><rect x="5" y="9" width="4" height="3" fill="#f4f4f4"/></svg></div>
<div class="ic" style="left:131.6px;top:2px"><svg viewBox="0 0 14 14"><rect x="3" y="2" width="3" height="10" fill="#d83a2a"/><path d="M8,3V6M8,8V11" stroke="#e8a090" stroke-width="1"/><rect x="9" y="2.5" width="3" height="3" fill="#3a5cd8"/><rect x="9" y="8.5" width="3" height="3" fill="#3a5cd8"/></svg></div>
<div class="ic" style="left:146.7px;top:2px"><svg viewBox="0 0 14 14"><rect x="2" y="3" width="8" height="8" fill="#b9b9b9" stroke="#8a8a8a" stroke-width="0.8"/><circle cx="8" cy="6.5" r="2.8" fill="#ececec" stroke="#777" stroke-width="1"/><path d="M2,12H12" stroke="#999" stroke-width="1"/></svg></div>
<div class="sep" style="left:162.0px"></div>
<div class="ic" style="left:165.0px;top:2px"><svg viewBox="0 0 14 14"><rect x="1.5" y="1.5" width="11" height="11" fill="#f2b0a8" stroke="#d85a50" stroke-width="0.8"/><rect x="4.5" y="4.5" width="6.5" height="7" fill="#e01818"/></svg></div>
<div class="end"></div>
</div>
<div class="strip" style="left:500px;top:45px;width:179px">
<div class="grip" style="left:2px"></div>
<div class="ic" style="left:6.7px;top:2px"><svg viewBox="0 0 14 14"><path d="M7,1L9.5,4H4.5ZM7,13L4.5,10H9.5ZM1,7L4,4.5V9.5ZM13,7L10,9.5V4.5Z" fill="#d81c1c"/><rect x="4.8" y="4.8" width="4.4" height="4.4" fill="#d81c1c"/></svg></div>
<div class="ic" style="left:21.7px;top:2px"><svg viewBox="0 0 14 14"><path d="M10.5,3.5A4.6,4.6 0 1 0 11.5,8" stroke="#222" stroke-width="1.2" fill="none"/><path d="M8.5,1.5L11.5,3.5L8.5,5.5Z" fill="#222"/><rect x="5" y="5" width="4" height="4.5" fill="#d81c1c"/></svg></div>
<div class="ic" style="left:36.8px;top:2px"><svg viewBox="0 0 14 14"><path d="M2,12L3.5,3H6.5V12ZM7.5,12V3H10.5L12,12Z" fill="#d04040"/><path d="M4,5H6M8,5H10M4,8H6M8,8H10" stroke="#f0b0b0" stroke-width="0.7"/></svg></div>
<div class="ic" style="left:51.0px;top:2px"><svg viewBox="0 0 14 14"><rect x="1.5" y="7" width="5" height="5.5" fill="#d81c1c"/><rect x="8" y="2" width="4.5" height="4.5" fill="#f0a0a0" stroke="#d81c1c" stroke-width="0.7"/><path d="M3,6L7,2M4.5,1.8H7.2V4.5" stroke="#222" stroke-width="1.2" fill="none"/></svg></div>
<div class="ic" style="left:66.0px;top:2px"><svg viewBox="0 0 14 14"><rect x="1.5" y="1.5" width="5" height="5" fill="#d83030"/><rect x="7.5" y="1.5" width="5" height="5" fill="#d83030"/><rect x="1.5" y="7.5" width="5" height="5" fill="#d83030"/><rect x="7.5" y="7.5" width="5" height="5" fill="#d83030"/><path d="M4,1.5V12.5M10,1.5V12.5M1.5,4H12.5M1.5,10H12.5" stroke="#f4c0c0" stroke-width="0.6"/></svg></div>
<div class="ic" style="left:80.4px;top:2px"><svg viewBox="0 0 14 14"><rect x="2" y="2" width="3" height="10" fill="#d81c1c"/><path d="M6,7H11M9,4.5L12,7L9,9.5" stroke="#111" stroke-width="1.5" fill="none"/></svg></div>
<div class="ic" style="left:95.4px;top:2px"><svg viewBox="0 0 14 14"><path d="M2,12H12M3,3H11M7,4V10M5,6L7,3.5L9,6" stroke="#111" stroke-width="1.3" fill="none"/></svg></div>
<div class="ic" style="left:109.5px;top:2px"><svg viewBox="0 0 14 14"><path d="M3,3L8,2L12,7L8,12L3,11Z" fill="#fdf4f2" stroke="#e4a8a0" stroke-width="0.9"/><path d="M5,5L8,4.5L10,7L8,9.5L5,9Z" fill="none" stroke="#e4a8a0" stroke-width="0.8"/></svg></div>
<div class="sep" style="left:124.0px"></div>
<div class="ic" style="left:127.4px;top:2px"><svg viewBox="0 0 14 14"><path d="M2,2L11,10" stroke="#c81c2a" stroke-width="1.3"/><path d="M4,2L12,9" stroke="#888" stroke-width="0.8"/><rect x="1.5" y="10.5" width="11" height="2.2" fill="#d81c1c"/></svg></div>
<div class="ic" style="left:143.0px;top:2px"><svg viewBox="0 0 14 14"><rect x="2" y="3" width="4" height="7" fill="#d84030"/><rect x="8" y="3" width="4" height="7" fill="#d84030"/><rect x="1.5" y="10" width="11" height="2.5" fill="#d81c1c"/><path d="M3,5H5M9,5H11" stroke="#f4c0b0" stroke-width="0.8"/></svg></div>
<div class="ic" style="left:158.0px;top:2px"><svg viewBox="0 0 14 14"><circle cx="7" cy="7" r="5" fill="#fff" stroke="#d81c1c" stroke-width="1.5"/><rect x="2" y="5.5" width="10" height="3" fill="#2a3cb8"/><path d="M4,7H10" stroke="#fff" stroke-width="0.7"/></svg></div>
<div class="end"></div>
</div>
<!-- LEFT TOOLBAR -->
<div id="ltb" class="abs">
  <div class="abs" style="left:3px;top:2px;width:12px;height:1px;background:repeating-linear-gradient(90deg,#8a8776 0 1px,transparent 1px 2px)"></div>
<div class="ic" style="left:5.0px;top:6.5px"><svg viewBox="0 0 14 14"><path d="M3,7L7.5,2.5M3,6.5L8,9" stroke="#c8182a" stroke-width="1.8"/><path d="M3,2V12" stroke="#c8182a" stroke-width="1.9"/><path d="M3,2V12" stroke="#000" stroke-width="1.9" opacity=".3"/><path d="M11.5,2V11.5" stroke="#555" stroke-width="1.6"/><path d="M8,7V13" stroke="#444" stroke-width="1.3"/></svg></div>
<div class="ic" style="left:5.0px;top:21.5px"><svg viewBox="0 0 14 14"><path d="M3,7L7.5,2.5M3,6.5L8,9" stroke="#d84a5a" stroke-width="1.8"/><path d="M3,2V12" stroke="#d84a5a" stroke-width="1.9"/><path d="M3,2V12" stroke="#000" stroke-width="1.9" opacity=".3"/><path d="M11.5,2V11.5" stroke="#777" stroke-width="1.6"/><path d="M8,7V13" stroke="#444" stroke-width="1.3"/></svg></div>
<div class="ic" style="left:5.0px;top:36.5px"><svg viewBox="0 0 14 14"><path d="M3,2V12" stroke="#7a1422" stroke-width="1.5"/><path d="M11.5,2V12" stroke="#3a6a4a" stroke-width="1.5"/><path d="M2,7L7,3.5L12,7L7,10.5Z" fill="#d8142a"/><path d="M7,10V13" stroke="#333" stroke-width="1"/></svg></div>
<div class="ic" style="left:5.0px;top:51px"><svg viewBox="0 0 14 14"><path d="M2.5,6.5L7,2L12.5,7.5L8,12.5Z" fill="#e01818"/><path d="M2,9.5L5.5,13" stroke="#b8141c" stroke-width="1.6"/></svg></div>
<div class="ic" style="left:5.0px;top:65.4px"><svg viewBox="0 0 14 14"><path d="M11.5,2V12" stroke="#555" stroke-width="1.4"/><path d="M3,3L10,7.5L3,12Z" fill="#e01818"/><path d="M3,2V12" stroke="#a81420" stroke-width="1.4"/></svg></div>
<div class="ic" style="left:5.0px;top:79.6px"><svg viewBox="0 0 14 14"><path d="M3,2V12" stroke="#a81420" stroke-width="1.4"/><path d="M10,2V12" stroke="#444" stroke-width="1.3"/><path d="M3,4L9,7L3,10L9,12" stroke="#c8182a" stroke-width="1.3" fill="none"/></svg></div>
<div class="ic" style="left:5.0px;top:93.4px"><svg viewBox="0 0 14 14"><path d="M3,7L7.5,2.5M3,6.5L8,9" stroke="#d8781c" stroke-width="1.8"/><path d="M3,2V12" stroke="#d8781c" stroke-width="1.9"/><path d="M3,2V12" stroke="#000" stroke-width="1.9" opacity=".3"/><path d="M11.5,2V11.5" stroke="#8a5a2a" stroke-width="1.6"/><path d="M8,7V13" stroke="#444" stroke-width="1.3"/></svg></div>
<div class="ic" style="left:5.0px;top:107.6px"><svg viewBox="0 0 14 14"><path d="M3,7L7.5,2.5M3,6.5L8,9" stroke="#e89a3a" stroke-width="1.8"/><path d="M3,2V12" stroke="#e89a3a" stroke-width="1.9"/><path d="M3,2V12" stroke="#000" stroke-width="1.9" opacity=".3"/><path d="M11.5,2V11.5" stroke="#9a7a4a" stroke-width="1.6"/><path d="M8,7V13" stroke="#444" stroke-width="1.3"/></svg></div>
<div class="ic" style="left:5.0px;top:121.8px"><svg viewBox="0 0 14 14"><path d="M3,7L7.5,2.5M3,6.5L8,9" stroke="#e8a030" stroke-width="1.8"/><path d="M3,2V12" stroke="#e8a030" stroke-width="1.9"/><path d="M3,2V12" stroke="#000" stroke-width="1.9" opacity=".3"/><path d="M11.5,2V11.5" stroke="#6a6a9a" stroke-width="1.6"/><path d="M8,7V13" stroke="#444" stroke-width="1.3"/></svg></div>
<div class="ic" style="left:5.0px;top:136px"><svg viewBox="0 0 14 14"><path d="M3,7L7.5,2.5M3,6.5L8,9" stroke="#e08a20" stroke-width="1.8"/><path d="M3,2V12" stroke="#e08a20" stroke-width="1.9"/><path d="M3,2V12" stroke="#000" stroke-width="1.9" opacity=".3"/><path d="M11.5,2V11.5" stroke="#555" stroke-width="1.6"/><path d="M8,7V13" stroke="#444" stroke-width="1.3"/></svg></div>
<div class="ic" style="left:5.0px;top:150.7px"><svg viewBox="0 0 14 14"><path d="M3,7L7.5,2.5M3,6.5L8,9" stroke="#2a3cd8" stroke-width="1.8"/><path d="M3,2V12" stroke="#2a3cd8" stroke-width="1.9"/><path d="M3,2V12" stroke="#000" stroke-width="1.9" opacity=".3"/><path d="M11.5,2V11.5" stroke="#4a4a8a" stroke-width="1.6"/><path d="M8,7V13" stroke="#444" stroke-width="1.3"/></svg></div>
<div class="ic" style="left:5.0px;top:164.9px"><svg viewBox="0 0 14 14"><path d="M3,7L7.5,2.5M3,6.5L8,9" stroke="#3a4ce0" stroke-width="1.8"/><path d="M3,2V12" stroke="#3a4ce0" stroke-width="1.9"/><path d="M3,2V12" stroke="#000" stroke-width="1.9" opacity=".3"/><path d="M11.5,2V11.5" stroke="#555" stroke-width="1.6"/><path d="M8,7V13" stroke="#444" stroke-width="1.3"/></svg></div>
<div class="ic" style="left:5.0px;top:179.5px"><svg viewBox="0 0 14 14"><path d="M3,7L7.5,2.5M3,6.5L8,9" stroke="#1c2cb8" stroke-width="1.8"/><path d="M3,2V12" stroke="#1c2cb8" stroke-width="1.9"/><path d="M3,2V12" stroke="#000" stroke-width="1.9" opacity=".3"/><path d="M11.5,2V11.5" stroke="#6a6a9a" stroke-width="1.6"/><path d="M8,7V13" stroke="#444" stroke-width="1.3"/></svg></div>
<div class="ic" style="left:5.0px;top:199px"><svg viewBox="0 0 14 14"><path d="M2,5.5L7,3L12,5.5V10L7,12.5L2,10Z" fill="#8d8d8d"/><path d="M2,5.5L7,8L12,5.5L7,3Z" fill="#e0b0b0"/><path d="M7,8V12.5" stroke="#555" stroke-width="0.8"/><circle cx="7" cy="6" r="1.2" fill="#a81c1c"/></svg></div>
<div class="ic" style="left:5.0px;top:213.7px"><svg viewBox="0 0 14 14"><path d="M2,5.5L7,3L12,5.5V10L7,12.5L2,10Z" fill="#c83030"/><path d="M2,5.5L7,8L12,5.5L7,3Z" fill="#8a2020"/><path d="M7,8V12.5M4.5,6.8V11.2M9.5,6.8V11.2" stroke="#f0c0c0" stroke-width="0.7"/></svg></div>
<div class="ic" style="left:5.0px;top:229px"><svg viewBox="0 0 14 14"><rect x="3" y="2.5" width="7" height="10" fill="#d83020"/><path d="M10,2.5L12,4V12.5H10Z" fill="#8a8a8a"/><rect x="2" y="6" width="2" height="3" fill="#8a8a8a"/></svg></div>
<div class="ic" style="left:5.0px;top:246px"><svg viewBox="0 0 14 14"><path d="M7,3V10M5,8L7,11L9,8" stroke="#222" stroke-width="1.2" fill="none"/></svg></div>
<div class="ic" style="left:5.0px;top:261px"><svg viewBox="0 0 14 14"><path d="M3,2V10M7,2V10M11,2V10M1.8,8L3,11L4.2,8M5.8,8L7,11L8.2,8M9.8,8L11,11L12.2,8" stroke="#111" stroke-width="1.1" fill="none"/></svg></div>
<div class="ic" style="left:5.0px;top:275.8px"><svg viewBox="0 0 14 14"><rect x="2" y="2.5" width="10" height="9.5" fill="#fdfdfd" stroke="#333" stroke-width="1"/><path d="M5.5,5L6.5,4.5V10M8.5,5.5C8.5,4 10.5,4 10.5,5.5C10.5,7 9.3,7 9.3,8.5M9.3,10V10.5" stroke="#222" stroke-width="0.9" fill="none"/></svg></div>
<div class="ic" style="left:5.0px;top:293.7px"><svg viewBox="0 0 14 14"><path d="M2,8L7,3.5L12,8V12H2Z" fill="#2ab8c8"/><path d="M4,8H10V12H4Z" fill="#e8f8fa"/><path d="M2,8L7,3.5L12,8" stroke="#555" stroke-width="1" fill="none"/><rect x="6" y="9" width="2" height="3" fill="#333"/></svg></div>
<div class="ic" style="left:5.0px;top:309px"><svg viewBox="0 0 14 14"><path d="M2,4.5L5,2L12,9.5L9,12Z" fill="#e6c634"/><path d="M9,12L12,9.5L12.5,12.5Z" fill="#8a7a2a"/></svg></div>
<div class="ic" style="left:5.0px;top:323px"><svg viewBox="0 0 14 14"><path d="M2,6L7,8L12,6V9.5L7,12L2,9.5Z" fill="#3a5cc8"/><path d="M4,3L7,6L10,3" stroke="#333" stroke-width="1.2" fill="none"/><path d="M2,6L7,8L12,6" stroke="#a0b8f0" stroke-width="0.8" fill="none"/></svg></div>
<div class="ic" style="left:5.0px;top:338px"><svg viewBox="0 0 14 14"><rect x="3" y="2" width="8" height="11" fill="#e8fafa" stroke="#1c8a9a" stroke-width="1.6"/><rect x="5" y="4" width="4" height="7" fill="#9adbe4"/></svg></div>
<div class="ic" style="left:5.0px;top:352px"><svg viewBox="0 0 14 14"><path d="M3,2H9L11,4V12H3Z" fill="#eef4fb" stroke="#7a8aa8" stroke-width="0.9"/><path d="M6.5,5.5L7.5,5V10" stroke="#222" stroke-width="1"/><rect x="2" y="9" width="4" height="3.5" fill="#8ab4e0"/></svg></div>
<div class="ic" style="left:5.0px;top:367.7px"><svg viewBox="0 0 14 14"><path d="M2.5,2.5L11.5,12M11.5,2.5L2.5,12" stroke="#62d2cc" stroke-width="2.6"/><circle cx="7" cy="7.2" r="1.6" fill="#38a8a8"/></svg></div>
<div class="ic" style="left:5.0px;top:384px"><svg viewBox="0 0 14 14"><path d="M3,2L11,9M11,2L3,9" stroke="#62d2cc" stroke-width="2.2"/><path d="M3.5,12.5L7,9L10.5,12.5" stroke="#111" stroke-width="1.8" fill="none"/></svg></div>
<div class="ic" style="left:5.0px;top:417px"><svg viewBox="0 0 14 14"><path d="M2.5,11.5L12,3" stroke="#c01828" stroke-width="1.7"/><path d="M2.5,3.5V12" stroke="#d05060" stroke-width="1.1"/></svg></div>
<div class="ic" style="left:5.0px;top:431.5px"><svg viewBox="0 0 14 14"><path d="M2.5,11.5L12,3" stroke="#c01828" stroke-width="1.7"/><path d="M2.5,3.5V12M2.5,12C5,11 7,9.5 8,7" stroke="#d05060" stroke-width="1.1" fill="none"/></svg></div>
<div class="ic" style="left:5.0px;top:449.8px"><svg viewBox="0 0 14 14"><path d="M3.5,7H10.5" stroke="#e87a70" stroke-width="1.2"/><circle cx="2.5" cy="7" r="1.5" fill="none" stroke="#e85a50" stroke-width="0.9"/><circle cx="11.5" cy="7" r="1.5" fill="none" stroke="#e85a50" stroke-width="0.9"/></svg></div>
<div class="ic" style="left:5.0px;top:468px"><svg viewBox="0 0 14 14"><path d="M2,3H12V12H9.5V8H4.5V12H2Z" fill="#c82a2a"/><path d="M2,5.5H12" stroke="#f4c0c0" stroke-width="0.8"/></svg></div>
<div class="ic" style="left:5.0px;top:483px"><svg viewBox="0 0 14 14"><path d="M10.5,1.5L12.5,3.5L6.5,10L4,7.5Z" fill="#39466e"/><path d="M4,7.5L6.5,10L2.5,12.5Z" fill="#7a98dc"/><path d="M9,3L11,5" stroke="#9aa6c8" stroke-width="1"/></svg></div>
<div class="ic" style="left:5.0px;top:497.7px"><svg viewBox="0 0 14 14"><ellipse cx="7" cy="5" rx="4.5" ry="2.2" fill="#d83030"/><path d="M2.5,7C2.5,12 11.5,12 11.5,7Z" fill="#3a5cd8"/><path d="M2.5,7H11.5" stroke="#f0d0d0" stroke-width="1"/></svg></div>
<div class="ic" style="left:5.0px;top:512.7px"><svg viewBox="0 0 14 14"><path d="M2,11L11,3" stroke="#222" stroke-width="1.6"/><circle cx="4" cy="5" r="2" fill="#d82a2a"/><circle cx="9.5" cy="9.5" r="2" fill="#e8a020"/><path d="M3,12L12,8" stroke="#2a4cd8" stroke-width="1.3"/></svg></div>
<div class="ic" style="left:5.0px;top:531px"><svg viewBox="0 0 14 14"><path d="M2,12C3,8 5,5 8,4" stroke="#222" stroke-width="1.2" fill="none"/><circle cx="10" cy="3" r="1" fill="#222"/><circle cx="12.5" cy="3" r="0.9" fill="#222"/><circle cx="10" cy="6" r="0.9" fill="#222"/><circle cx="12.5" cy="6" r="0.9" fill="#222"/></svg></div><div class="dd" style="left:17px;top:88px;border-top-color:#222"></div><div class="abs" style="left:1px;top:402px;width:18px;height:9px;background:linear-gradient(180deg,#e4e2d8,#c9c6b8);border-radius:2px"></div><div class="abs" style="left:3px;top:404px;width:2px;height:5px;background:repeating-linear-gradient(180deg,#555 0 1px,transparent 1px 2px)"></div><div class="abs" style="left:3px;top:406px;width:0px;height:1px;background:repeating-linear-gradient(90deg,#8a8776 0 1px,transparent 1px 2px)"></div><div class="abs" style="left:15px;top:404px;width:0;height:0;border-top:2px solid transparent;border-bottom:2px solid transparent;border-left:2.5px solid #222"></div><div class="abs" style="left:14px;top:548px;width:0;height:0;border-top:2px solid transparent;border-bottom:2px solid transparent;border-left:2.5px solid #222"></div>
</div>
<!-- MDI -->
<div id="mdi" class="abs">
  <!-- Struttura (active) -->
  <div class="win" style="left:1px;top:1px;width:287px;height:473px;background:linear-gradient(90deg,rgba(255,255,255,0) 0,rgba(255,255,255,.22) 100%),linear-gradient(180deg,#96b7de 0px,#aecbea 3px,#b9d1ec 18px,#c3d9f0 60px,#bfd6ee 100%);border-color:#586f8e">
    <div class="cap">
      <div class="abs" style="left:6px;top:5px;width:9px;height:10px;background:linear-gradient(135deg,#fff,#dfe6f0);border:1px solid #cdd6e4"></div>
      <div class="tt">Struttura</div>
      <div class="wbtn" style="left:220px;background:linear-gradient(180deg,#c9daef,#a9c1e0 50%,#93afd5 50%,#b4cae6)"><div class="abs" style="left:5px;top:4px;width:7px;height:2.5px;background:#fff;border:0.6px solid #465a78;border-radius:1px"></div></div>
      <div class="wbtn" style="left:241px;background:linear-gradient(180deg,#c9daef,#a9c1e0 50%,#93afd5 50%,#b4cae6)"><div class="abs" style="left:6px;top:1.5px;width:6px;height:5px;background:#fff;border:1px solid #34465f"></div><div class="abs" style="left:8px;top:3.5px;width:2px;height:1.5px;background:#34465f"></div></div>
      <div class="wbtn" style="left:262px;border-color:#7a2b22;background:linear-gradient(180deg,#e9a99c,#d9705e 50%,#c2321c 50%,#d8553c)"><svg class="abs" style="left:5.5px;top:1.5px" width="7" height="6" viewBox="0 0 7 6"><path d="M1,0.5L6,5.5M6,0.5L1,5.5" stroke="#fff" stroke-width="1.5"/></svg></div>
    </div>
    <div class="inner" style="left:5px;top:17px;width:276px;height:452px;background:#fff;border-color:#9db2cc"></div>
    <div class="client" style="left:7px;top:20px;width:270px;height:433px">
      <svg class="abs" style="left:0;top:0" width="270" height="433" viewBox="0 0 270 433"><g stroke-linecap="round" filter="url(#soft2)">
<line x1="58.7" y1="113.0" x2="243.2" y2="162.3" stroke="#f2ac1c" stroke-width="1.9"/>
<line x1="58.7" y1="118.6" x2="243.2" y2="168.1" stroke="#f2ac1c" stroke-width="1.9"/>
<line x1="58.7" y1="136.6" x2="243.2" y2="186.5" stroke="#f2ac1c" stroke-width="1.9"/>
<line x1="58.7" y1="142.2" x2="243.2" y2="192.3" stroke="#f2ac1c" stroke-width="1.9"/>
<line x1="58.7" y1="160.2" x2="243.2" y2="210.7" stroke="#f2ac1c" stroke-width="1.9"/>
<line x1="58.7" y1="165.8" x2="243.2" y2="216.4" stroke="#f2ac1c" stroke-width="1.9"/>
<line x1="58.7" y1="183.8" x2="243.2" y2="234.9" stroke="#f2ac1c" stroke-width="1.9"/>
<line x1="58.7" y1="189.4" x2="243.2" y2="240.6" stroke="#f2ac1c" stroke-width="1.9"/>
<line x1="58.7" y1="207.4" x2="243.2" y2="259.1" stroke="#f2ac1c" stroke-width="1.9"/>
<line x1="58.7" y1="213.0" x2="243.2" y2="264.8" stroke="#f2ac1c" stroke-width="1.9"/>
<line x1="58.7" y1="231.0" x2="243.2" y2="283.3" stroke="#f2ac1c" stroke-width="1.9"/>
<line x1="58.7" y1="236.6" x2="243.2" y2="289.0" stroke="#f2ac1c" stroke-width="1.9"/>
<line x1="58.7" y1="254.6" x2="243.2" y2="307.5" stroke="#f2ac1c" stroke-width="1.9"/>
<line x1="58.7" y1="260.2" x2="243.2" y2="313.2" stroke="#f2ac1c" stroke-width="1.9"/>
<line x1="51.5" y1="135.6" x2="62.5" y2="138.2" stroke="#cc84f6" stroke-width="1.7"/>
<line x1="51.5" y1="159.2" x2="62.5" y2="161.8" stroke="#cc84f6" stroke-width="1.7"/>
<line x1="51.5" y1="182.8" x2="62.5" y2="185.4" stroke="#cc84f6" stroke-width="1.7"/>
<line x1="51.5" y1="206.4" x2="62.5" y2="209.0" stroke="#cc84f6" stroke-width="1.7"/>
<line x1="51.5" y1="230.0" x2="62.5" y2="232.6" stroke="#cc84f6" stroke-width="1.7"/>
<line x1="51.5" y1="253.6" x2="62.5" y2="256.2" stroke="#cc84f6" stroke-width="1.7"/>
<line x1="57.5" y1="135.2" x2="237.2" y2="183.3" stroke="#4cd828" stroke-width="1.9"/>
<line x1="60.5" y1="138.7" x2="237.2" y2="186.1" stroke="#a4dc24" stroke-width="1.3"/>
<line x1="57.5" y1="158.8" x2="237.2" y2="207.5" stroke="#4cd828" stroke-width="1.9"/>
<line x1="60.5" y1="162.3" x2="237.2" y2="210.3" stroke="#a4dc24" stroke-width="1.3"/>
<line x1="57.5" y1="182.4" x2="237.2" y2="231.7" stroke="#4cd828" stroke-width="1.9"/>
<line x1="60.5" y1="185.9" x2="237.2" y2="234.5" stroke="#a4dc24" stroke-width="1.3"/>
<line x1="57.5" y1="206.0" x2="237.2" y2="255.9" stroke="#4cd828" stroke-width="1.9"/>
<line x1="60.5" y1="209.5" x2="237.2" y2="258.7" stroke="#a4dc24" stroke-width="1.3"/>
<line x1="57.5" y1="229.6" x2="237.2" y2="280.1" stroke="#4cd828" stroke-width="1.9"/>
<line x1="60.5" y1="233.1" x2="237.2" y2="282.8" stroke="#a4dc24" stroke-width="1.3"/>
<line x1="57.5" y1="253.2" x2="237.2" y2="304.3" stroke="#4cd828" stroke-width="1.9"/>
<line x1="60.5" y1="256.7" x2="237.2" y2="307.0" stroke="#a4dc24" stroke-width="1.3"/>
<line x1="58.7" y1="127.7" x2="72.1" y2="139.6" stroke="#58dc30" stroke-width="1.5"/>
<line x1="58.7" y1="128.7" x2="77.2" y2="142.2" stroke="#2ccc26" stroke-width="1.5"/>
<line x1="59.7" y1="141.7" x2="79.2" y2="132.2" stroke="#2ccc26" stroke-width="1.5"/>
<line x1="79.2" y1="133.2" x2="92.8" y2="145.1" stroke="#58dc30" stroke-width="1.5"/>
<line x1="79.2" y1="134.2" x2="97.7" y2="147.7" stroke="#2ccc26" stroke-width="1.5"/>
<line x1="80.2" y1="147.2" x2="99.7" y2="137.7" stroke="#2ccc26" stroke-width="1.5"/>
<line x1="99.7" y1="138.7" x2="113.4" y2="150.7" stroke="#58dc30" stroke-width="1.5"/>
<line x1="99.7" y1="139.7" x2="118.2" y2="153.3" stroke="#2ccc26" stroke-width="1.5"/>
<line x1="100.7" y1="152.7" x2="120.2" y2="143.3" stroke="#2ccc26" stroke-width="1.5"/>
<line x1="120.2" y1="144.3" x2="134.0" y2="156.2" stroke="#58dc30" stroke-width="1.5"/>
<line x1="120.2" y1="145.3" x2="138.7" y2="158.8" stroke="#2ccc26" stroke-width="1.5"/>
<line x1="121.2" y1="158.3" x2="140.7" y2="148.8" stroke="#2ccc26" stroke-width="1.5"/>
<line x1="140.7" y1="149.8" x2="154.7" y2="161.7" stroke="#58dc30" stroke-width="1.5"/>
<line x1="140.7" y1="150.8" x2="159.2" y2="164.3" stroke="#2ccc26" stroke-width="1.5"/>
<line x1="141.7" y1="163.8" x2="161.2" y2="154.3" stroke="#2ccc26" stroke-width="1.5"/>
<line x1="161.2" y1="155.3" x2="175.3" y2="167.2" stroke="#58dc30" stroke-width="1.5"/>
<line x1="161.2" y1="156.3" x2="179.7" y2="169.8" stroke="#2ccc26" stroke-width="1.5"/>
<line x1="162.2" y1="169.3" x2="181.7" y2="159.8" stroke="#2ccc26" stroke-width="1.5"/>
<line x1="181.7" y1="160.8" x2="195.9" y2="172.7" stroke="#58dc30" stroke-width="1.5"/>
<line x1="181.7" y1="161.8" x2="200.2" y2="175.3" stroke="#2ccc26" stroke-width="1.5"/>
<line x1="182.7" y1="174.8" x2="202.2" y2="165.3" stroke="#2ccc26" stroke-width="1.5"/>
<line x1="202.2" y1="166.3" x2="216.5" y2="178.3" stroke="#58dc30" stroke-width="1.5"/>
<line x1="202.2" y1="167.3" x2="220.7" y2="180.9" stroke="#2ccc26" stroke-width="1.5"/>
<line x1="203.2" y1="180.3" x2="222.7" y2="170.9" stroke="#2ccc26" stroke-width="1.5"/>
<line x1="222.7" y1="171.9" x2="237.2" y2="183.8" stroke="#58dc30" stroke-width="1.5"/>
<line x1="222.7" y1="172.9" x2="241.2" y2="186.4" stroke="#2ccc26" stroke-width="1.5"/>
<line x1="223.7" y1="185.9" x2="243.2" y2="176.4" stroke="#2ccc26" stroke-width="1.5"/>
<line x1="58.7" y1="151.3" x2="72.1" y2="163.3" stroke="#58dc30" stroke-width="1.5"/>
<line x1="58.7" y1="152.3" x2="77.2" y2="165.9" stroke="#2ccc26" stroke-width="1.5"/>
<line x1="59.7" y1="165.3" x2="79.2" y2="155.9" stroke="#2ccc26" stroke-width="1.5"/>
<line x1="79.2" y1="156.9" x2="92.8" y2="168.9" stroke="#58dc30" stroke-width="1.5"/>
<line x1="79.2" y1="157.9" x2="97.7" y2="171.5" stroke="#2ccc26" stroke-width="1.5"/>
<line x1="80.2" y1="170.9" x2="99.7" y2="161.5" stroke="#2ccc26" stroke-width="1.5"/>
<line x1="99.7" y1="162.5" x2="113.4" y2="174.5" stroke="#58dc30" stroke-width="1.5"/>
<line x1="99.7" y1="163.5" x2="118.2" y2="177.1" stroke="#2ccc26" stroke-width="1.5"/>
<line x1="100.7" y1="176.5" x2="120.2" y2="167.1" stroke="#2ccc26" stroke-width="1.5"/>
<line x1="120.2" y1="168.1" x2="134.0" y2="180.0" stroke="#58dc30" stroke-width="1.5"/>
<line x1="120.2" y1="169.1" x2="138.7" y2="182.6" stroke="#2ccc26" stroke-width="1.5"/>
<line x1="121.2" y1="182.1" x2="140.7" y2="172.6" stroke="#2ccc26" stroke-width="1.5"/>
<line x1="140.7" y1="173.6" x2="154.7" y2="185.6" stroke="#58dc30" stroke-width="1.5"/>
<line x1="140.7" y1="174.6" x2="159.2" y2="188.2" stroke="#2ccc26" stroke-width="1.5"/>
<line x1="141.7" y1="187.6" x2="161.2" y2="178.2" stroke="#2ccc26" stroke-width="1.5"/>
<line x1="161.2" y1="179.2" x2="175.3" y2="191.2" stroke="#58dc30" stroke-width="1.5"/>
<line x1="161.2" y1="180.2" x2="179.7" y2="193.8" stroke="#2ccc26" stroke-width="1.5"/>
<line x1="162.2" y1="193.2" x2="181.7" y2="183.8" stroke="#2ccc26" stroke-width="1.5"/>
<line x1="181.7" y1="184.8" x2="195.9" y2="196.8" stroke="#58dc30" stroke-width="1.5"/>
<line x1="181.7" y1="185.8" x2="200.2" y2="199.4" stroke="#2ccc26" stroke-width="1.5"/>
<line x1="182.7" y1="198.8" x2="202.2" y2="189.4" stroke="#2ccc26" stroke-width="1.5"/>
<line x1="202.2" y1="190.4" x2="216.5" y2="202.4" stroke="#58dc30" stroke-width="1.5"/>
<line x1="202.2" y1="191.4" x2="220.7" y2="205.0" stroke="#2ccc26" stroke-width="1.5"/>
<line x1="203.2" y1="204.4" x2="222.7" y2="195.0" stroke="#2ccc26" stroke-width="1.5"/>
<line x1="222.7" y1="196.0" x2="237.2" y2="208.0" stroke="#58dc30" stroke-width="1.5"/>
<line x1="222.7" y1="197.0" x2="241.2" y2="210.6" stroke="#2ccc26" stroke-width="1.5"/>
<line x1="223.7" y1="210.0" x2="243.2" y2="200.6" stroke="#2ccc26" stroke-width="1.5"/>
<line x1="58.7" y1="174.9" x2="72.1" y2="187.0" stroke="#58dc30" stroke-width="1.5"/>
<line x1="58.7" y1="175.9" x2="77.2" y2="189.6" stroke="#2ccc26" stroke-width="1.5"/>
<line x1="59.7" y1="188.9" x2="79.2" y2="179.6" stroke="#2ccc26" stroke-width="1.5"/>
<line x1="79.2" y1="180.6" x2="92.8" y2="192.6" stroke="#58dc30" stroke-width="1.5"/>
<line x1="79.2" y1="181.6" x2="97.7" y2="195.2" stroke="#2ccc26" stroke-width="1.5"/>
<line x1="80.2" y1="194.6" x2="99.7" y2="185.2" stroke="#2ccc26" stroke-width="1.5"/>
<line x1="99.7" y1="186.2" x2="113.4" y2="198.3" stroke="#58dc30" stroke-width="1.5"/>
<line x1="99.7" y1="187.2" x2="118.2" y2="200.9" stroke="#2ccc26" stroke-width="1.5"/>
<line x1="100.7" y1="200.2" x2="120.2" y2="190.9" stroke="#2ccc26" stroke-width="1.5"/>
<line x1="120.2" y1="191.9" x2="134.0" y2="203.9" stroke="#58dc30" stroke-width="1.5"/>
<line x1="120.2" y1="192.9" x2="138.7" y2="206.5" stroke="#2ccc26" stroke-width="1.5"/>
<line x1="121.2" y1="205.9" x2="140.7" y2="196.5" stroke="#2ccc26" stroke-width="1.5"/>
<line x1="140.7" y1="197.5" x2="154.7" y2="209.6" stroke="#58dc30" stroke-width="1.5"/>
<line x1="140.7" y1="198.5" x2="159.2" y2="212.2" stroke="#2ccc26" stroke-width="1.5"/>
<line x1="141.7" y1="211.5" x2="161.2" y2="202.2" stroke="#2ccc26" stroke-width="1.5"/>
<line x1="161.2" y1="203.2" x2="175.3" y2="215.2" stroke="#58dc30" stroke-width="1.5"/>
<line x1="161.2" y1="204.2" x2="179.7" y2="217.8" stroke="#2ccc26" stroke-width="1.5"/>
<line x1="162.2" y1="217.2" x2="181.7" y2="207.8" stroke="#2ccc26" stroke-width="1.5"/>
<line x1="181.7" y1="208.8" x2="195.9" y2="220.9" stroke="#58dc30" stroke-width="1.5"/>
<line x1="181.7" y1="209.8" x2="200.2" y2="223.5" stroke="#2ccc26" stroke-width="1.5"/>
<line x1="182.7" y1="222.8" x2="202.2" y2="213.5" stroke="#2ccc26" stroke-width="1.5"/>
<line x1="202.2" y1="214.5" x2="216.5" y2="226.5" stroke="#58dc30" stroke-width="1.5"/>
<line x1="202.2" y1="215.5" x2="220.7" y2="229.1" stroke="#2ccc26" stroke-width="1.5"/>
<line x1="203.2" y1="228.5" x2="222.7" y2="219.1" stroke="#2ccc26" stroke-width="1.5"/>
<line x1="222.7" y1="220.1" x2="237.2" y2="232.2" stroke="#58dc30" stroke-width="1.5"/>
<line x1="222.7" y1="221.1" x2="241.2" y2="234.8" stroke="#2ccc26" stroke-width="1.5"/>
<line x1="223.7" y1="234.1" x2="243.2" y2="224.8" stroke="#2ccc26" stroke-width="1.5"/>
<line x1="58.7" y1="198.5" x2="72.1" y2="210.6" stroke="#58dc30" stroke-width="1.5"/>
<line x1="58.7" y1="199.5" x2="77.2" y2="213.2" stroke="#2ccc26" stroke-width="1.5"/>
<line x1="59.7" y1="212.5" x2="79.2" y2="203.2" stroke="#2ccc26" stroke-width="1.5"/>
<line x1="79.2" y1="204.2" x2="92.8" y2="216.3" stroke="#58dc30" stroke-width="1.5"/>
<line x1="79.2" y1="205.2" x2="97.7" y2="218.9" stroke="#2ccc26" stroke-width="1.5"/>
<line x1="80.2" y1="218.2" x2="99.7" y2="208.9" stroke="#2ccc26" stroke-width="1.5"/>
<line x1="99.7" y1="209.9" x2="113.4" y2="222.1" stroke="#58dc30" stroke-width="1.5"/>
<line x1="99.7" y1="210.9" x2="118.2" y2="224.7" stroke="#2ccc26" stroke-width="1.5"/>
<line x1="100.7" y1="223.9" x2="120.2" y2="214.7" stroke="#2ccc26" stroke-width="1.5"/>
<line x1="120.2" y1="215.7" x2="134.0" y2="227.8" stroke="#58dc30" stroke-width="1.5"/>
<line x1="120.2" y1="216.7" x2="138.7" y2="230.4" stroke="#2ccc26" stroke-width="1.5"/>
<line x1="121.2" y1="229.7" x2="140.7" y2="220.4" stroke="#2ccc26" stroke-width="1.5"/>
<line x1="140.7" y1="221.4" x2="154.7" y2="233.5" stroke="#58dc30" stroke-width="1.5"/>
<line x1="140.7" y1="222.4" x2="159.2" y2="236.1" stroke="#2ccc26" stroke-width="1.5"/>
<line x1="141.7" y1="235.4" x2="161.2" y2="226.1" stroke="#2ccc26" stroke-width="1.5"/>
<line x1="161.2" y1="227.1" x2="175.3" y2="239.2" stroke="#58dc30" stroke-width="1.5"/>
<line x1="161.2" y1="228.1" x2="179.7" y2="241.8" stroke="#2ccc26" stroke-width="1.5"/>
<line x1="162.2" y1="241.1" x2="181.7" y2="231.8" stroke="#2ccc26" stroke-width="1.5"/>
<line x1="181.7" y1="232.8" x2="195.9" y2="244.9" stroke="#58dc30" stroke-width="1.5"/>
<line x1="181.7" y1="233.8" x2="200.2" y2="247.5" stroke="#2ccc26" stroke-width="1.5"/>
<line x1="182.7" y1="246.8" x2="202.2" y2="237.5" stroke="#2ccc26" stroke-width="1.5"/>
<line x1="202.2" y1="238.5" x2="216.5" y2="250.7" stroke="#58dc30" stroke-width="1.5"/>
<line x1="202.2" y1="239.5" x2="220.7" y2="253.3" stroke="#2ccc26" stroke-width="1.5"/>
<line x1="203.2" y1="252.5" x2="222.7" y2="243.3" stroke="#2ccc26" stroke-width="1.5"/>
<line x1="222.7" y1="244.3" x2="237.2" y2="256.4" stroke="#58dc30" stroke-width="1.5"/>
<line x1="222.7" y1="245.3" x2="241.2" y2="259.0" stroke="#2ccc26" stroke-width="1.5"/>
<line x1="223.7" y1="258.3" x2="243.2" y2="249.0" stroke="#2ccc26" stroke-width="1.5"/>
<line x1="58.7" y1="222.1" x2="72.1" y2="234.3" stroke="#58dc30" stroke-width="1.5"/>
<line x1="58.7" y1="223.1" x2="77.2" y2="236.9" stroke="#2ccc26" stroke-width="1.5"/>
<line x1="59.7" y1="236.1" x2="79.2" y2="226.9" stroke="#2ccc26" stroke-width="1.5"/>
<line x1="79.2" y1="227.9" x2="92.8" y2="240.1" stroke="#58dc30" stroke-width="1.5"/>
<line x1="79.2" y1="228.9" x2="97.7" y2="242.7" stroke="#2ccc26" stroke-width="1.5"/>
<line x1="80.2" y1="241.9" x2="99.7" y2="232.7" stroke="#2ccc26" stroke-width="1.5"/>
<line x1="99.7" y1="233.7" x2="113.4" y2="245.9" stroke="#58dc30" stroke-width="1.5"/>
<line x1="99.7" y1="234.7" x2="118.2" y2="248.5" stroke="#2ccc26" stroke-width="1.5"/>
<line x1="100.7" y1="247.7" x2="120.2" y2="238.5" stroke="#2ccc26" stroke-width="1.5"/>
<line x1="120.2" y1="239.5" x2="134.0" y2="251.6" stroke="#58dc30" stroke-width="1.5"/>
<line x1="120.2" y1="240.5" x2="138.7" y2="254.2" stroke="#2ccc26" stroke-width="1.5"/>
<line x1="121.2" y1="253.5" x2="140.7" y2="244.2" stroke="#2ccc26" stroke-width="1.5"/>
<line x1="140.7" y1="245.2" x2="154.7" y2="257.4" stroke="#58dc30" stroke-width="1.5"/>
<line x1="140.7" y1="246.2" x2="159.2" y2="260.0" stroke="#2ccc26" stroke-width="1.5"/>
<line x1="141.7" y1="259.2" x2="161.2" y2="250.0" stroke="#2ccc26" stroke-width="1.5"/>
<line x1="161.2" y1="251.0" x2="175.3" y2="263.2" stroke="#58dc30" stroke-width="1.5"/>
<line x1="161.2" y1="252.0" x2="179.7" y2="265.8" stroke="#2ccc26" stroke-width="1.5"/>
<line x1="162.2" y1="265.0" x2="181.7" y2="255.8" stroke="#2ccc26" stroke-width="1.5"/>
<line x1="181.7" y1="256.8" x2="195.9" y2="269.0" stroke="#58dc30" stroke-width="1.5"/>
<line x1="181.7" y1="257.8" x2="200.2" y2="271.6" stroke="#2ccc26" stroke-width="1.5"/>
<line x1="182.7" y1="270.8" x2="202.2" y2="261.6" stroke="#2ccc26" stroke-width="1.5"/>
<line x1="202.2" y1="262.6" x2="216.5" y2="274.8" stroke="#58dc30" stroke-width="1.5"/>
<line x1="202.2" y1="263.6" x2="220.7" y2="277.4" stroke="#2ccc26" stroke-width="1.5"/>
<line x1="203.2" y1="276.6" x2="222.7" y2="267.4" stroke="#2ccc26" stroke-width="1.5"/>
<line x1="222.7" y1="268.4" x2="237.2" y2="280.6" stroke="#58dc30" stroke-width="1.5"/>
<line x1="222.7" y1="269.4" x2="241.2" y2="283.2" stroke="#2ccc26" stroke-width="1.5"/>
<line x1="223.7" y1="282.4" x2="243.2" y2="273.2" stroke="#2ccc26" stroke-width="1.5"/>
<line x1="58.7" y1="245.7" x2="72.1" y2="258.0" stroke="#58dc30" stroke-width="1.5"/>
<line x1="58.7" y1="246.7" x2="77.2" y2="260.6" stroke="#2ccc26" stroke-width="1.5"/>
<line x1="59.7" y1="259.7" x2="79.2" y2="250.6" stroke="#2ccc26" stroke-width="1.5"/>
<line x1="79.2" y1="251.6" x2="92.8" y2="263.8" stroke="#58dc30" stroke-width="1.5"/>
<line x1="79.2" y1="252.6" x2="97.7" y2="266.4" stroke="#2ccc26" stroke-width="1.5"/>
<line x1="80.2" y1="265.6" x2="99.7" y2="256.4" stroke="#2ccc26" stroke-width="1.5"/>
<line x1="99.7" y1="257.4" x2="113.4" y2="269.7" stroke="#58dc30" stroke-width="1.5"/>
<line x1="99.7" y1="258.4" x2="118.2" y2="272.3" stroke="#2ccc26" stroke-width="1.5"/>
<line x1="100.7" y1="271.4" x2="120.2" y2="262.3" stroke="#2ccc26" stroke-width="1.5"/>
<line x1="120.2" y1="263.3" x2="134.0" y2="275.5" stroke="#58dc30" stroke-width="1.5"/>
<line x1="120.2" y1="264.3" x2="138.7" y2="278.1" stroke="#2ccc26" stroke-width="1.5"/>
<line x1="121.2" y1="277.3" x2="140.7" y2="268.1" stroke="#2ccc26" stroke-width="1.5"/>
<line x1="140.7" y1="269.1" x2="154.7" y2="281.4" stroke="#58dc30" stroke-width="1.5"/>
<line x1="140.7" y1="270.1" x2="159.2" y2="284.0" stroke="#2ccc26" stroke-width="1.5"/>
<line x1="141.7" y1="283.1" x2="161.2" y2="274.0" stroke="#2ccc26" stroke-width="1.5"/>
<line x1="161.2" y1="275.0" x2="175.3" y2="287.2" stroke="#58dc30" stroke-width="1.5"/>
<line x1="161.2" y1="276.0" x2="179.7" y2="289.8" stroke="#2ccc26" stroke-width="1.5"/>
<line x1="162.2" y1="289.0" x2="181.7" y2="279.8" stroke="#2ccc26" stroke-width="1.5"/>
<line x1="181.7" y1="280.8" x2="195.9" y2="293.1" stroke="#58dc30" stroke-width="1.5"/>
<line x1="181.7" y1="281.8" x2="200.2" y2="295.7" stroke="#2ccc26" stroke-width="1.5"/>
<line x1="182.7" y1="294.8" x2="202.2" y2="285.7" stroke="#2ccc26" stroke-width="1.5"/>
<line x1="202.2" y1="286.7" x2="216.5" y2="298.9" stroke="#58dc30" stroke-width="1.5"/>
<line x1="202.2" y1="287.7" x2="220.7" y2="301.5" stroke="#2ccc26" stroke-width="1.5"/>
<line x1="203.2" y1="300.7" x2="222.7" y2="291.5" stroke="#2ccc26" stroke-width="1.5"/>
<line x1="222.7" y1="292.5" x2="237.2" y2="304.8" stroke="#58dc30" stroke-width="1.5"/>
<line x1="222.7" y1="293.5" x2="241.2" y2="307.4" stroke="#2ccc26" stroke-width="1.5"/>
<line x1="223.7" y1="306.5" x2="243.2" y2="297.4" stroke="#2ccc26" stroke-width="1.5"/>
<line x1="58.7" y1="102.5" x2="58.7" y2="275.5" stroke="#1a1ae6" stroke-width="2.4"/>
<line x1="51.5" y1="109.0" x2="51.5" y2="285.9" stroke="#1a1ae6" stroke-width="2.4"/>
<line x1="79.2" y1="108.0" x2="79.2" y2="272.4" stroke="#1a1ae6" stroke-width="2.4"/>
<line x1="72.1" y1="135.6" x2="72.1" y2="278.8" stroke="#1a1ae6" stroke-width="2.4"/>
<line x1="99.7" y1="113.4" x2="99.7" y2="278.3" stroke="#1a1ae6" stroke-width="2.4"/>
<line x1="92.8" y1="141.1" x2="92.8" y2="284.7" stroke="#1a1ae6" stroke-width="2.4"/>
<line x1="120.2" y1="118.9" x2="120.2" y2="284.2" stroke="#1a1ae6" stroke-width="2.4"/>
<line x1="113.4" y1="146.6" x2="113.4" y2="290.6" stroke="#1a1ae6" stroke-width="2.4"/>
<line x1="140.7" y1="124.3" x2="140.7" y2="290.1" stroke="#1a1ae6" stroke-width="2.4"/>
<line x1="134.0" y1="152.1" x2="134.0" y2="296.6" stroke="#1a1ae6" stroke-width="2.4"/>
<line x1="161.2" y1="129.8" x2="161.2" y2="296.1" stroke="#1a1ae6" stroke-width="2.4"/>
<line x1="154.7" y1="136.3" x2="154.7" y2="302.5" stroke="#1a1ae6" stroke-width="2.4"/>
<line x1="181.7" y1="135.2" x2="181.7" y2="302.0" stroke="#1a1ae6" stroke-width="2.4"/>
<line x1="175.3" y1="163.2" x2="175.3" y2="308.4" stroke="#1a1ae6" stroke-width="2.4"/>
<line x1="202.2" y1="140.7" x2="202.2" y2="307.9" stroke="#1a1ae6" stroke-width="2.4"/>
<line x1="195.9" y1="147.2" x2="195.9" y2="314.3" stroke="#1a1ae6" stroke-width="2.4"/>
<line x1="222.7" y1="146.1" x2="222.7" y2="313.8" stroke="#1a1ae6" stroke-width="2.4"/>
<line x1="216.5" y1="174.2" x2="216.5" y2="320.2" stroke="#1a1ae6" stroke-width="2.4"/>
<line x1="243.2" y1="151.6" x2="243.2" y2="319.7" stroke="#1a1ae6" stroke-width="2.4"/>
<line x1="237.2" y1="158.1" x2="237.2" y2="326.1" stroke="#1a1ae6" stroke-width="2.4"/>
<line x1="51.5" y1="133.1" x2="79.2" y2="133.2" stroke="#86f0f8" stroke-width="1.9"/>
<line x1="79.2" y1="133.2" x2="72.1" y2="138.6" stroke="#cc84f6" stroke-width="1.7"/>
<line x1="72.1" y1="138.6" x2="99.7" y2="138.7" stroke="#86f0f8" stroke-width="1.9"/>
<line x1="99.7" y1="138.7" x2="92.8" y2="144.1" stroke="#cc84f6" stroke-width="1.7"/>
<line x1="92.8" y1="144.1" x2="120.2" y2="144.3" stroke="#86f0f8" stroke-width="1.9"/>
<line x1="120.2" y1="144.3" x2="113.4" y2="149.7" stroke="#cc84f6" stroke-width="1.7"/>
<line x1="113.4" y1="149.7" x2="140.7" y2="149.8" stroke="#86f0f8" stroke-width="1.9"/>
<line x1="140.7" y1="149.8" x2="134.0" y2="155.2" stroke="#cc84f6" stroke-width="1.7"/>
<line x1="134.0" y1="155.2" x2="161.2" y2="155.3" stroke="#86f0f8" stroke-width="1.9"/>
<line x1="161.2" y1="155.3" x2="154.7" y2="160.7" stroke="#cc84f6" stroke-width="1.7"/>
<line x1="154.7" y1="160.7" x2="181.7" y2="160.8" stroke="#86f0f8" stroke-width="1.9"/>
<line x1="181.7" y1="160.8" x2="175.3" y2="166.2" stroke="#cc84f6" stroke-width="1.7"/>
<line x1="175.3" y1="166.2" x2="202.2" y2="166.3" stroke="#86f0f8" stroke-width="1.9"/>
<line x1="202.2" y1="166.3" x2="195.9" y2="171.7" stroke="#cc84f6" stroke-width="1.7"/>
<line x1="195.9" y1="171.7" x2="222.7" y2="171.9" stroke="#86f0f8" stroke-width="1.9"/>
<line x1="222.7" y1="171.9" x2="216.5" y2="177.3" stroke="#cc84f6" stroke-width="1.7"/>
<line x1="216.5" y1="177.3" x2="243.2" y2="177.4" stroke="#86f0f8" stroke-width="1.9"/>
<line x1="243.2" y1="177.4" x2="237.2" y2="182.8" stroke="#cc84f6" stroke-width="1.7"/>
<line x1="58.7" y1="127.7" x2="51.5" y2="133.1" stroke="#cc84f6" stroke-width="1.7"/>
<line x1="51.5" y1="156.7" x2="79.2" y2="156.9" stroke="#86f0f8" stroke-width="1.9"/>
<line x1="79.2" y1="156.9" x2="72.1" y2="162.3" stroke="#cc84f6" stroke-width="1.7"/>
<line x1="72.1" y1="162.3" x2="99.7" y2="162.5" stroke="#86f0f8" stroke-width="1.9"/>
<line x1="99.7" y1="162.5" x2="92.8" y2="167.9" stroke="#cc84f6" stroke-width="1.7"/>
<line x1="92.8" y1="167.9" x2="120.2" y2="168.1" stroke="#86f0f8" stroke-width="1.9"/>
<line x1="120.2" y1="168.1" x2="113.4" y2="173.5" stroke="#cc84f6" stroke-width="1.7"/>
<line x1="113.4" y1="173.5" x2="140.7" y2="173.6" stroke="#86f0f8" stroke-width="1.9"/>
<line x1="140.7" y1="173.6" x2="134.0" y2="179.0" stroke="#cc84f6" stroke-width="1.7"/>
<line x1="134.0" y1="179.0" x2="161.2" y2="179.2" stroke="#86f0f8" stroke-width="1.9"/>
<line x1="161.2" y1="179.2" x2="154.7" y2="184.6" stroke="#cc84f6" stroke-width="1.7"/>
<line x1="154.7" y1="184.6" x2="181.7" y2="184.8" stroke="#86f0f8" stroke-width="1.9"/>
<line x1="181.7" y1="184.8" x2="175.3" y2="190.2" stroke="#cc84f6" stroke-width="1.7"/>
<line x1="175.3" y1="190.2" x2="202.2" y2="190.4" stroke="#86f0f8" stroke-width="1.9"/>
<line x1="202.2" y1="190.4" x2="195.9" y2="195.8" stroke="#cc84f6" stroke-width="1.7"/>
<line x1="195.9" y1="195.8" x2="222.7" y2="196.0" stroke="#86f0f8" stroke-width="1.9"/>
<line x1="222.7" y1="196.0" x2="216.5" y2="201.4" stroke="#cc84f6" stroke-width="1.7"/>
<line x1="216.5" y1="201.4" x2="243.2" y2="201.6" stroke="#86f0f8" stroke-width="1.9"/>
<line x1="243.2" y1="201.6" x2="237.2" y2="207.0" stroke="#cc84f6" stroke-width="1.7"/>
<line x1="58.7" y1="151.3" x2="51.5" y2="156.7" stroke="#cc84f6" stroke-width="1.7"/>
<line x1="51.5" y1="180.3" x2="79.2" y2="180.6" stroke="#86f0f8" stroke-width="1.9"/>
<line x1="79.2" y1="180.6" x2="72.1" y2="186.0" stroke="#cc84f6" stroke-width="1.7"/>
<line x1="72.1" y1="186.0" x2="99.7" y2="186.2" stroke="#86f0f8" stroke-width="1.9"/>
<line x1="99.7" y1="186.2" x2="92.8" y2="191.6" stroke="#cc84f6" stroke-width="1.7"/>
<line x1="92.8" y1="191.6" x2="120.2" y2="191.9" stroke="#86f0f8" stroke-width="1.9"/>
<line x1="120.2" y1="191.9" x2="113.4" y2="197.3" stroke="#cc84f6" stroke-width="1.7"/>
<line x1="113.4" y1="197.3" x2="140.7" y2="197.5" stroke="#86f0f8" stroke-width="1.9"/>
<line x1="140.7" y1="197.5" x2="134.0" y2="202.9" stroke="#cc84f6" stroke-width="1.7"/>
<line x1="134.0" y1="202.9" x2="161.2" y2="203.2" stroke="#86f0f8" stroke-width="1.9"/>
<line x1="161.2" y1="203.2" x2="154.7" y2="208.6" stroke="#cc84f6" stroke-width="1.7"/>
<line x1="154.7" y1="208.6" x2="181.7" y2="208.8" stroke="#86f0f8" stroke-width="1.9"/>
<line x1="181.7" y1="208.8" x2="175.3" y2="214.2" stroke="#cc84f6" stroke-width="1.7"/>
<line x1="175.3" y1="214.2" x2="202.2" y2="214.5" stroke="#86f0f8" stroke-width="1.9"/>
<line x1="202.2" y1="214.5" x2="195.9" y2="219.9" stroke="#cc84f6" stroke-width="1.7"/>
<line x1="195.9" y1="219.9" x2="222.7" y2="220.1" stroke="#86f0f8" stroke-width="1.9"/>
<line x1="222.7" y1="220.1" x2="216.5" y2="225.5" stroke="#cc84f6" stroke-width="1.7"/>
<line x1="216.5" y1="225.5" x2="243.2" y2="225.8" stroke="#86f0f8" stroke-width="1.9"/>
<line x1="243.2" y1="225.8" x2="237.2" y2="231.2" stroke="#cc84f6" stroke-width="1.7"/>
<line x1="58.7" y1="174.9" x2="51.5" y2="180.3" stroke="#cc84f6" stroke-width="1.7"/>
<line x1="51.5" y1="203.9" x2="79.2" y2="204.2" stroke="#86f0f8" stroke-width="1.9"/>
<line x1="79.2" y1="204.2" x2="72.1" y2="209.6" stroke="#cc84f6" stroke-width="1.7"/>
<line x1="72.1" y1="209.6" x2="99.7" y2="209.9" stroke="#86f0f8" stroke-width="1.9"/>
<line x1="99.7" y1="209.9" x2="92.8" y2="215.3" stroke="#cc84f6" stroke-width="1.7"/>
<line x1="92.8" y1="215.3" x2="120.2" y2="215.7" stroke="#86f0f8" stroke-width="1.9"/>
<line x1="120.2" y1="215.7" x2="113.4" y2="221.1" stroke="#cc84f6" stroke-width="1.7"/>
<line x1="113.4" y1="221.1" x2="140.7" y2="221.4" stroke="#86f0f8" stroke-width="1.9"/>
<line x1="140.7" y1="221.4" x2="134.0" y2="226.8" stroke="#cc84f6" stroke-width="1.7"/>
<line x1="134.0" y1="226.8" x2="161.2" y2="227.1" stroke="#86f0f8" stroke-width="1.9"/>
<line x1="161.2" y1="227.1" x2="154.7" y2="232.5" stroke="#cc84f6" stroke-width="1.7"/>
<line x1="154.7" y1="232.5" x2="181.7" y2="232.8" stroke="#86f0f8" stroke-width="1.9"/>
<line x1="181.7" y1="232.8" x2="175.3" y2="238.2" stroke="#cc84f6" stroke-width="1.7"/>
<line x1="175.3" y1="238.2" x2="202.2" y2="238.5" stroke="#86f0f8" stroke-width="1.9"/>
<line x1="202.2" y1="238.5" x2="195.9" y2="243.9" stroke="#cc84f6" stroke-width="1.7"/>
<line x1="195.9" y1="243.9" x2="222.7" y2="244.3" stroke="#86f0f8" stroke-width="1.9"/>
<line x1="222.7" y1="244.3" x2="216.5" y2="249.7" stroke="#cc84f6" stroke-width="1.7"/>
<line x1="216.5" y1="249.7" x2="243.2" y2="250.0" stroke="#86f0f8" stroke-width="1.9"/>
<line x1="243.2" y1="250.0" x2="237.2" y2="255.4" stroke="#cc84f6" stroke-width="1.7"/>
<line x1="58.7" y1="198.5" x2="51.5" y2="203.9" stroke="#cc84f6" stroke-width="1.7"/>
<line x1="51.5" y1="227.5" x2="79.2" y2="227.9" stroke="#86f0f8" stroke-width="1.9"/>
<line x1="79.2" y1="227.9" x2="72.1" y2="233.3" stroke="#cc84f6" stroke-width="1.7"/>
<line x1="72.1" y1="233.3" x2="99.7" y2="233.7" stroke="#86f0f8" stroke-width="1.9"/>
<line x1="99.7" y1="233.7" x2="92.8" y2="239.1" stroke="#cc84f6" stroke-width="1.7"/>
<line x1="92.8" y1="239.1" x2="120.2" y2="239.5" stroke="#86f0f8" stroke-width="1.9"/>
<line x1="120.2" y1="239.5" x2="113.4" y2="244.9" stroke="#cc84f6" stroke-width="1.7"/>
<line x1="113.4" y1="244.9" x2="140.7" y2="245.2" stroke="#86f0f8" stroke-width="1.9"/>
<line x1="140.7" y1="245.2" x2="134.0" y2="250.6" stroke="#cc84f6" stroke-width="1.7"/>
<line x1="134.0" y1="250.6" x2="161.2" y2="251.0" stroke="#86f0f8" stroke-width="1.9"/>
<line x1="161.2" y1="251.0" x2="154.7" y2="256.4" stroke="#cc84f6" stroke-width="1.7"/>
<line x1="154.7" y1="256.4" x2="181.7" y2="256.8" stroke="#86f0f8" stroke-width="1.9"/>
<line x1="181.7" y1="256.8" x2="175.3" y2="262.2" stroke="#cc84f6" stroke-width="1.7"/>
<line x1="175.3" y1="262.2" x2="202.2" y2="262.6" stroke="#86f0f8" stroke-width="1.9"/>
<line x1="202.2" y1="262.6" x2="195.9" y2="268.0" stroke="#cc84f6" stroke-width="1.7"/>
<line x1="195.9" y1="268.0" x2="222.7" y2="268.4" stroke="#86f0f8" stroke-width="1.9"/>
<line x1="222.7" y1="268.4" x2="216.5" y2="273.8" stroke="#cc84f6" stroke-width="1.7"/>
<line x1="216.5" y1="273.8" x2="243.2" y2="274.2" stroke="#86f0f8" stroke-width="1.9"/>
<line x1="243.2" y1="274.2" x2="237.2" y2="279.6" stroke="#cc84f6" stroke-width="1.7"/>
<line x1="58.7" y1="222.1" x2="51.5" y2="227.5" stroke="#cc84f6" stroke-width="1.7"/>
<line x1="51.5" y1="251.1" x2="79.2" y2="251.6" stroke="#86f0f8" stroke-width="1.9"/>
<line x1="79.2" y1="251.6" x2="72.1" y2="257.0" stroke="#cc84f6" stroke-width="1.7"/>
<line x1="72.1" y1="257.0" x2="99.7" y2="257.4" stroke="#86f0f8" stroke-width="1.9"/>
<line x1="99.7" y1="257.4" x2="92.8" y2="262.8" stroke="#cc84f6" stroke-width="1.7"/>
<line x1="92.8" y1="262.8" x2="120.2" y2="263.3" stroke="#86f0f8" stroke-width="1.9"/>
<line x1="120.2" y1="263.3" x2="113.4" y2="268.7" stroke="#cc84f6" stroke-width="1.7"/>
<line x1="113.4" y1="268.7" x2="140.7" y2="269.1" stroke="#86f0f8" stroke-width="1.9"/>
<line x1="140.7" y1="269.1" x2="134.0" y2="274.5" stroke="#cc84f6" stroke-width="1.7"/>
<line x1="134.0" y1="274.5" x2="161.2" y2="275.0" stroke="#86f0f8" stroke-width="1.9"/>
<line x1="161.2" y1="275.0" x2="154.7" y2="280.4" stroke="#cc84f6" stroke-width="1.7"/>
<line x1="154.7" y1="280.4" x2="181.7" y2="280.8" stroke="#86f0f8" stroke-width="1.9"/>
<line x1="181.7" y1="280.8" x2="175.3" y2="286.2" stroke="#cc84f6" stroke-width="1.7"/>
<line x1="175.3" y1="286.2" x2="202.2" y2="286.7" stroke="#86f0f8" stroke-width="1.9"/>
<line x1="202.2" y1="286.7" x2="195.9" y2="292.1" stroke="#cc84f6" stroke-width="1.7"/>
<line x1="195.9" y1="292.1" x2="222.7" y2="292.5" stroke="#86f0f8" stroke-width="1.9"/>
<line x1="222.7" y1="292.5" x2="216.5" y2="297.9" stroke="#cc84f6" stroke-width="1.7"/>
<line x1="216.5" y1="297.9" x2="243.2" y2="298.4" stroke="#86f0f8" stroke-width="1.9"/>
<line x1="243.2" y1="298.4" x2="237.2" y2="303.8" stroke="#cc84f6" stroke-width="1.7"/>
<line x1="58.7" y1="245.7" x2="51.5" y2="251.1" stroke="#cc84f6" stroke-width="1.7"/>
<circle cx="55.5" cy="145.1" r="1.3" fill="#e010d0"/>
<circle cx="117.4" cy="161.8" r="1.3" fill="#e010d0"/>
<circle cx="158.7" cy="172.9" r="1.3" fill="#e010d0"/>
<circle cx="241.2" cy="195.1" r="1.3" fill="#e010d0"/>
<circle cx="57.5" cy="168.7" r="1.3" fill="#e010d0"/>
<circle cx="119.4" cy="185.6" r="1.3" fill="#e010d0"/>
<circle cx="160.7" cy="196.8" r="1.3" fill="#e010d0"/>
<circle cx="243.2" cy="219.3" r="1.3" fill="#e010d0"/>
<circle cx="55.5" cy="192.3" r="1.3" fill="#e010d0"/>
<circle cx="117.4" cy="209.4" r="1.3" fill="#e010d0"/>
<circle cx="158.7" cy="220.7" r="1.3" fill="#e010d0"/>
<circle cx="241.2" cy="243.5" r="1.3" fill="#e010d0"/>
<circle cx="57.5" cy="215.9" r="1.3" fill="#e010d0"/>
<circle cx="119.4" cy="233.2" r="1.3" fill="#e010d0"/>
<circle cx="160.7" cy="244.7" r="1.3" fill="#e010d0"/>
<circle cx="243.2" cy="267.7" r="1.3" fill="#e010d0"/>
<circle cx="55.5" cy="239.5" r="1.3" fill="#e010d0"/>
<circle cx="117.4" cy="257.0" r="1.3" fill="#e010d0"/>
<circle cx="158.7" cy="268.6" r="1.3" fill="#e010d0"/>
<circle cx="241.2" cy="291.9" r="1.3" fill="#e010d0"/>
<circle cx="57.5" cy="263.1" r="1.3" fill="#e010d0"/>
<circle cx="119.4" cy="280.8" r="1.3" fill="#e010d0"/>
<circle cx="160.7" cy="292.5" r="1.3" fill="#e010d0"/>
<circle cx="243.2" cy="316.1" r="1.3" fill="#e010d0"/>
<circle cx="51.5" cy="109.0" r="1.4" fill="#e8ffff"/>
<line x1="50.0" y1="133.0" x2="50.0" y2="153.0" stroke="#7ff0f0" stroke-width="1.0"/>
<line x1="27.8" y1="141.0" x2="51.5" y2="121.4" stroke="#f2ac1c" stroke-width="1.9"/>
<line x1="27.8" y1="146.6" x2="51.5" y2="127.0" stroke="#f2ac1c" stroke-width="1.9"/>
<line x1="27.8" y1="164.6" x2="51.5" y2="145.0" stroke="#f2ac1c" stroke-width="1.9"/>
<line x1="27.8" y1="170.2" x2="51.5" y2="150.6" stroke="#f2ac1c" stroke-width="1.9"/>
<line x1="27.8" y1="188.2" x2="51.5" y2="168.6" stroke="#f2ac1c" stroke-width="1.9"/>
<line x1="27.8" y1="193.8" x2="51.5" y2="174.2" stroke="#f2ac1c" stroke-width="1.9"/>
<line x1="27.8" y1="211.8" x2="51.5" y2="192.2" stroke="#f2ac1c" stroke-width="1.9"/>
<line x1="27.8" y1="217.4" x2="51.5" y2="197.8" stroke="#f2ac1c" stroke-width="1.9"/>
<line x1="27.8" y1="235.4" x2="51.5" y2="215.8" stroke="#f2ac1c" stroke-width="1.9"/>
<line x1="27.8" y1="241.0" x2="51.5" y2="221.4" stroke="#f2ac1c" stroke-width="1.9"/>
<line x1="27.8" y1="259.0" x2="51.5" y2="239.4" stroke="#f2ac1c" stroke-width="1.9"/>
<line x1="27.8" y1="264.6" x2="51.5" y2="245.0" stroke="#f2ac1c" stroke-width="1.9"/>
<line x1="27.8" y1="282.6" x2="51.5" y2="263.0" stroke="#f2ac1c" stroke-width="1.9"/>
<line x1="27.8" y1="288.2" x2="51.5" y2="268.6" stroke="#f2ac1c" stroke-width="1.9"/>
<line x1="27.8" y1="156.4" x2="38.8" y2="157.4" stroke="#cc84f6" stroke-width="1.7"/>
<line x1="38.8" y1="146.6" x2="51.5" y2="146.6" stroke="#cc84f6" stroke-width="1.7"/>
<line x1="38.8" y1="155.8" x2="51.5" y2="138.3" stroke="#2ccc26" stroke-width="1.5"/>
<line x1="27.8" y1="163.6" x2="38.8" y2="146.8" stroke="#58dc30" stroke-width="1.5"/>
<line x1="27.8" y1="180.0" x2="38.8" y2="181.0" stroke="#cc84f6" stroke-width="1.7"/>
<line x1="38.8" y1="170.2" x2="51.5" y2="170.2" stroke="#cc84f6" stroke-width="1.7"/>
<line x1="38.8" y1="179.4" x2="51.5" y2="161.9" stroke="#2ccc26" stroke-width="1.5"/>
<line x1="27.8" y1="187.2" x2="38.8" y2="170.4" stroke="#58dc30" stroke-width="1.5"/>
<line x1="27.8" y1="203.6" x2="38.8" y2="204.6" stroke="#cc84f6" stroke-width="1.7"/>
<line x1="38.8" y1="193.8" x2="51.5" y2="193.8" stroke="#cc84f6" stroke-width="1.7"/>
<line x1="38.8" y1="203.0" x2="51.5" y2="185.5" stroke="#2ccc26" stroke-width="1.5"/>
<line x1="27.8" y1="210.8" x2="38.8" y2="194.0" stroke="#58dc30" stroke-width="1.5"/>
<line x1="27.8" y1="227.2" x2="38.8" y2="228.2" stroke="#cc84f6" stroke-width="1.7"/>
<line x1="38.8" y1="217.4" x2="51.5" y2="217.4" stroke="#cc84f6" stroke-width="1.7"/>
<line x1="38.8" y1="226.6" x2="51.5" y2="209.1" stroke="#2ccc26" stroke-width="1.5"/>
<line x1="27.8" y1="234.4" x2="38.8" y2="217.6" stroke="#58dc30" stroke-width="1.5"/>
<line x1="27.8" y1="250.8" x2="38.8" y2="251.8" stroke="#cc84f6" stroke-width="1.7"/>
<line x1="38.8" y1="241.0" x2="51.5" y2="241.0" stroke="#cc84f6" stroke-width="1.7"/>
<line x1="38.8" y1="250.2" x2="51.5" y2="232.7" stroke="#2ccc26" stroke-width="1.5"/>
<line x1="27.8" y1="258.0" x2="38.8" y2="241.2" stroke="#58dc30" stroke-width="1.5"/>
<line x1="27.8" y1="274.4" x2="38.8" y2="275.4" stroke="#cc84f6" stroke-width="1.7"/>
<line x1="38.8" y1="264.6" x2="51.5" y2="264.6" stroke="#cc84f6" stroke-width="1.7"/>
<line x1="38.8" y1="273.8" x2="51.5" y2="256.3" stroke="#2ccc26" stroke-width="1.5"/>
<line x1="27.8" y1="281.6" x2="38.8" y2="264.8" stroke="#58dc30" stroke-width="1.5"/>
<line x1="38.8" y1="119.1" x2="38.8" y2="299.3" stroke="#1a1ae6" stroke-width="2.4"/>
<line x1="27.8" y1="131.3" x2="27.8" y2="296.2" stroke="#1a1ae6" stroke-width="2.4"/>
      </g>
      <g transform="translate(37.4,426.4)"><g transform="scale(1.0)" filter="url(#soft)">
<path d="M-2.4,-3.2 L-22.3,-9.0 L-21.6,-11.3 L-35.4,-10.4 L-24.2,-2.2 L-23.6,-4.6 L-3.6,1.2Z" fill="#16b416"/>
<path d="M2.1,-3.0 L2.1,-22.0 L4.2,-22.0 L0.0,-35.5 L-4.2,-22.0 L-2.1,-22.0 L-2.1,-3.0Z" fill="#1616dc"/>
<path d="M4.7,-1.3 L14.5,-11.4 L16.0,-9.9 L19.0,-19.5 L9.5,-16.2 L11.0,-14.7 L1.3,-4.7Z" fill="#e01212"/>
<path d="M-5.4,-3.5 L0.5,-5.6 L5.4,-3.4 L5.4,3.4 L-0.5,5.6 L-5.4,3.2Z" fill="#ffffff"/>
<path d="M-5.4,-3.5 L-0.5,-1.2 L5.4,-3.4 M-0.5,-1.2 L-0.5,5.6" stroke="#c4c4c4" stroke-width="0.7" fill="none"/>
</g></g>
      </svg>
    </div>
    <div class="abs" style="left:7px;top:453px;width:270px;height:15px;background:#ececec;border-top:1px solid #c9c9c9"></div>
    <div class="tab" style="left:6px;top:453px;width:34px;height:15px;line-height:14px;padding-left:3px"><span>Struttura</span></div>
  </div>
  <!-- Modello (inactive) -->
  <div class="win" style="left:288px;top:1px;width:286px;height:473px;background:linear-gradient(180deg,#dbe6f4 0px,#e3ecf7 30px,#e2ebf6 100%);border-color:#6f7f95">
    <div class="cap">
      <svg class="abs" style="left:5px;top:5px" width="11" height="11" viewBox="0 0 11 11"><rect x="0" y="0" width="11" height="11" fill="#fff" opacity=".7"/><path d="M1,2H10M2.5,2V10M5.5,2V10M8.5,2V10" stroke="#e24a6a" stroke-width="1.1" fill="none"/><path d="M1,1H10" stroke="#6a86d8" stroke-width="1"/></svg>
      <div class="tt" style="color:#55606e;left:19px">Modello</div>
      <div class="wbtn" style="left:219px;border-color:#b7c3d4;background:linear-gradient(180deg,#e4ecf6,#d8e2ef)"><div class="abs" style="left:5px;top:4px;width:7px;height:2.5px;background:#f4f7fb;border:0.6px solid #77869c;border-radius:1px"></div></div>
      <div class="wbtn" style="left:240px;border-color:#b7c3d4;background:linear-gradient(180deg,#e4ecf6,#d8e2ef)"><div class="abs" style="left:6px;top:1.5px;width:6px;height:5px;background:#f4f7fb;border:1px solid #77869c"></div></div>
      <div class="wbtn" style="left:261px;border-color:#b7c3d4;background:linear-gradient(180deg,#e4ecf6,#d8e2ef)"><svg class="abs" style="left:5px;top:1px" width="8" height="7" viewBox="0 0 8 7"><path d="M1,0.5L7,6.5M7,0.5L1,6.5" stroke="#8b97aa" stroke-width="1.6"/></svg></div>
    </div>
    <div class="inner" style="left:4px;top:17px;width:276px;height:452px;background:#fff;border-color:#c3cfdf"></div>
    <div class="client" style="left:6px;top:20px;width:270px;height:433px">
      <svg class="abs" style="left:0;top:0" width="270" height="433" viewBox="0 0 270 433"><g stroke-linecap="round" filter="url(#soft3)">
<line x1="61.3" y1="115.0" x2="241.8" y2="158.6" stroke="#ac3a14" stroke-width="0.85"/>
<line x1="61.3" y1="120.5" x2="241.8" y2="164.1" stroke="#ac3a14" stroke-width="0.85"/>
<line x1="61.3" y1="140.2" x2="241.8" y2="183.9" stroke="#ac3a14" stroke-width="0.85"/>
<line x1="61.3" y1="145.7" x2="241.8" y2="189.4" stroke="#ac3a14" stroke-width="0.85"/>
<line x1="61.3" y1="165.4" x2="241.8" y2="209.2" stroke="#ac3a14" stroke-width="0.85"/>
<line x1="61.3" y1="170.9" x2="241.8" y2="214.7" stroke="#ac3a14" stroke-width="0.85"/>
<line x1="61.3" y1="190.6" x2="241.8" y2="234.4" stroke="#ac3a14" stroke-width="0.85"/>
<line x1="61.3" y1="196.1" x2="241.8" y2="239.9" stroke="#ac3a14" stroke-width="0.85"/>
<line x1="61.3" y1="215.8" x2="241.8" y2="259.7" stroke="#ac3a14" stroke-width="0.85"/>
<line x1="61.3" y1="221.3" x2="241.8" y2="265.2" stroke="#ac3a14" stroke-width="0.85"/>
<line x1="61.3" y1="241.0" x2="241.8" y2="285.0" stroke="#ac3a14" stroke-width="0.85"/>
<line x1="61.3" y1="246.5" x2="241.8" y2="290.5" stroke="#ac3a14" stroke-width="0.85"/>
<line x1="61.3" y1="266.2" x2="241.8" y2="310.3" stroke="#ac3a14" stroke-width="0.85"/>
<line x1="61.3" y1="271.7" x2="241.8" y2="315.8" stroke="#ac3a14" stroke-width="0.85"/>
<line x1="54.4" y1="138.1" x2="65.4" y2="140.7" stroke="#ac3a14" stroke-width="0.8"/>
<line x1="54.4" y1="163.3" x2="65.4" y2="165.9" stroke="#ac3a14" stroke-width="0.8"/>
<line x1="54.4" y1="188.5" x2="65.4" y2="191.1" stroke="#ac3a14" stroke-width="0.8"/>
<line x1="54.4" y1="213.7" x2="65.4" y2="216.3" stroke="#ac3a14" stroke-width="0.8"/>
<line x1="54.4" y1="238.9" x2="65.4" y2="241.5" stroke="#ac3a14" stroke-width="0.8"/>
<line x1="54.4" y1="264.1" x2="65.4" y2="266.7" stroke="#ac3a14" stroke-width="0.8"/>
<line x1="61.3" y1="130.1" x2="74.5" y2="141.4" stroke="#ac3a14" stroke-width="0.7"/>
<line x1="61.3" y1="131.1" x2="79.4" y2="143.9" stroke="#ac3a14" stroke-width="0.7"/>
<line x1="62.3" y1="144.1" x2="81.4" y2="133.9" stroke="#ac3a14" stroke-width="0.7"/>
<line x1="81.4" y1="134.9" x2="94.5" y2="146.3" stroke="#ac3a14" stroke-width="0.7"/>
<line x1="81.4" y1="135.9" x2="99.4" y2="148.8" stroke="#ac3a14" stroke-width="0.7"/>
<line x1="82.4" y1="148.9" x2="101.4" y2="138.8" stroke="#ac3a14" stroke-width="0.7"/>
<line x1="101.4" y1="139.8" x2="114.6" y2="151.1" stroke="#ac3a14" stroke-width="0.7"/>
<line x1="101.4" y1="140.8" x2="119.5" y2="153.6" stroke="#ac3a14" stroke-width="0.7"/>
<line x1="102.4" y1="153.8" x2="121.5" y2="143.6" stroke="#ac3a14" stroke-width="0.7"/>
<line x1="121.5" y1="144.6" x2="134.6" y2="156.0" stroke="#ac3a14" stroke-width="0.7"/>
<line x1="121.5" y1="145.6" x2="139.5" y2="158.5" stroke="#ac3a14" stroke-width="0.7"/>
<line x1="122.5" y1="158.6" x2="141.5" y2="148.5" stroke="#ac3a14" stroke-width="0.7"/>
<line x1="141.5" y1="149.5" x2="154.7" y2="160.8" stroke="#ac3a14" stroke-width="0.7"/>
<line x1="141.5" y1="150.5" x2="159.6" y2="163.3" stroke="#ac3a14" stroke-width="0.7"/>
<line x1="142.5" y1="163.5" x2="161.6" y2="153.3" stroke="#ac3a14" stroke-width="0.7"/>
<line x1="161.6" y1="154.3" x2="174.8" y2="165.7" stroke="#ac3a14" stroke-width="0.7"/>
<line x1="161.6" y1="155.3" x2="179.7" y2="168.2" stroke="#ac3a14" stroke-width="0.7"/>
<line x1="162.6" y1="168.3" x2="181.7" y2="158.2" stroke="#ac3a14" stroke-width="0.7"/>
<line x1="181.7" y1="159.2" x2="194.8" y2="170.5" stroke="#ac3a14" stroke-width="0.7"/>
<line x1="181.7" y1="160.2" x2="199.7" y2="173.0" stroke="#ac3a14" stroke-width="0.7"/>
<line x1="182.7" y1="173.2" x2="201.7" y2="163.0" stroke="#ac3a14" stroke-width="0.7"/>
<line x1="201.7" y1="164.0" x2="214.9" y2="175.4" stroke="#ac3a14" stroke-width="0.7"/>
<line x1="201.7" y1="165.0" x2="219.8" y2="177.9" stroke="#ac3a14" stroke-width="0.7"/>
<line x1="202.7" y1="178.0" x2="221.8" y2="167.9" stroke="#ac3a14" stroke-width="0.7"/>
<line x1="221.8" y1="168.9" x2="234.9" y2="180.2" stroke="#ac3a14" stroke-width="0.7"/>
<line x1="221.8" y1="169.9" x2="239.8" y2="182.7" stroke="#ac3a14" stroke-width="0.7"/>
<line x1="222.8" y1="182.9" x2="241.8" y2="172.7" stroke="#ac3a14" stroke-width="0.7"/>
<line x1="61.3" y1="155.3" x2="74.5" y2="166.7" stroke="#ac3a14" stroke-width="0.7"/>
<line x1="61.3" y1="156.3" x2="79.4" y2="169.2" stroke="#ac3a14" stroke-width="0.7"/>
<line x1="62.3" y1="169.3" x2="81.4" y2="159.2" stroke="#ac3a14" stroke-width="0.7"/>
<line x1="81.4" y1="160.2" x2="94.5" y2="171.5" stroke="#ac3a14" stroke-width="0.7"/>
<line x1="81.4" y1="161.2" x2="99.4" y2="174.0" stroke="#ac3a14" stroke-width="0.7"/>
<line x1="82.4" y1="174.2" x2="101.4" y2="164.0" stroke="#ac3a14" stroke-width="0.7"/>
<line x1="101.4" y1="165.0" x2="114.6" y2="176.4" stroke="#ac3a14" stroke-width="0.7"/>
<line x1="101.4" y1="166.0" x2="119.5" y2="178.9" stroke="#ac3a14" stroke-width="0.7"/>
<line x1="102.4" y1="179.0" x2="121.5" y2="168.9" stroke="#ac3a14" stroke-width="0.7"/>
<line x1="121.5" y1="169.9" x2="134.6" y2="181.2" stroke="#ac3a14" stroke-width="0.7"/>
<line x1="121.5" y1="170.9" x2="139.5" y2="183.7" stroke="#ac3a14" stroke-width="0.7"/>
<line x1="122.5" y1="183.9" x2="141.5" y2="173.7" stroke="#ac3a14" stroke-width="0.7"/>
<line x1="141.5" y1="174.7" x2="154.7" y2="186.1" stroke="#ac3a14" stroke-width="0.7"/>
<line x1="141.5" y1="175.7" x2="159.6" y2="188.6" stroke="#ac3a14" stroke-width="0.7"/>
<line x1="142.5" y1="188.7" x2="161.6" y2="178.6" stroke="#ac3a14" stroke-width="0.7"/>
<line x1="161.6" y1="179.6" x2="174.8" y2="190.9" stroke="#ac3a14" stroke-width="0.7"/>
<line x1="161.6" y1="180.6" x2="179.7" y2="193.4" stroke="#ac3a14" stroke-width="0.7"/>
<line x1="162.6" y1="193.6" x2="181.7" y2="183.4" stroke="#ac3a14" stroke-width="0.7"/>
<line x1="181.7" y1="184.4" x2="194.8" y2="195.8" stroke="#ac3a14" stroke-width="0.7"/>
<line x1="181.7" y1="185.4" x2="199.7" y2="198.3" stroke="#ac3a14" stroke-width="0.7"/>
<line x1="182.7" y1="198.4" x2="201.7" y2="188.3" stroke="#ac3a14" stroke-width="0.7"/>
<line x1="201.7" y1="189.3" x2="214.9" y2="200.7" stroke="#ac3a14" stroke-width="0.7"/>
<line x1="201.7" y1="190.3" x2="219.8" y2="203.2" stroke="#ac3a14" stroke-width="0.7"/>
<line x1="202.7" y1="203.3" x2="221.8" y2="193.2" stroke="#ac3a14" stroke-width="0.7"/>
<line x1="221.8" y1="194.2" x2="234.9" y2="205.5" stroke="#ac3a14" stroke-width="0.7"/>
<line x1="221.8" y1="195.2" x2="239.8" y2="208.0" stroke="#ac3a14" stroke-width="0.7"/>
<line x1="222.8" y1="208.2" x2="241.8" y2="198.0" stroke="#ac3a14" stroke-width="0.7"/>
<line x1="61.3" y1="180.5" x2="74.5" y2="191.9" stroke="#ac3a14" stroke-width="0.7"/>
<line x1="61.3" y1="181.5" x2="79.4" y2="194.4" stroke="#ac3a14" stroke-width="0.7"/>
<line x1="62.3" y1="194.5" x2="81.4" y2="184.4" stroke="#ac3a14" stroke-width="0.7"/>
<line x1="81.4" y1="185.4" x2="94.5" y2="196.7" stroke="#ac3a14" stroke-width="0.7"/>
<line x1="81.4" y1="186.4" x2="99.4" y2="199.2" stroke="#ac3a14" stroke-width="0.7"/>
<line x1="82.4" y1="199.4" x2="101.4" y2="189.2" stroke="#ac3a14" stroke-width="0.7"/>
<line x1="101.4" y1="190.2" x2="114.6" y2="201.6" stroke="#ac3a14" stroke-width="0.7"/>
<line x1="101.4" y1="191.2" x2="119.5" y2="204.1" stroke="#ac3a14" stroke-width="0.7"/>
<line x1="102.4" y1="204.2" x2="121.5" y2="194.1" stroke="#ac3a14" stroke-width="0.7"/>
<line x1="121.5" y1="195.1" x2="134.6" y2="206.5" stroke="#ac3a14" stroke-width="0.7"/>
<line x1="121.5" y1="196.1" x2="139.5" y2="209.0" stroke="#ac3a14" stroke-width="0.7"/>
<line x1="122.5" y1="209.1" x2="141.5" y2="199.0" stroke="#ac3a14" stroke-width="0.7"/>
<line x1="141.5" y1="200.0" x2="154.7" y2="211.3" stroke="#ac3a14" stroke-width="0.7"/>
<line x1="141.5" y1="201.0" x2="159.6" y2="213.8" stroke="#ac3a14" stroke-width="0.7"/>
<line x1="142.5" y1="214.0" x2="161.6" y2="203.8" stroke="#ac3a14" stroke-width="0.7"/>
<line x1="161.6" y1="204.8" x2="174.8" y2="216.2" stroke="#ac3a14" stroke-width="0.7"/>
<line x1="161.6" y1="205.8" x2="179.7" y2="218.7" stroke="#ac3a14" stroke-width="0.7"/>
<line x1="162.6" y1="218.8" x2="181.7" y2="208.7" stroke="#ac3a14" stroke-width="0.7"/>
<line x1="181.7" y1="209.7" x2="194.8" y2="221.1" stroke="#ac3a14" stroke-width="0.7"/>
<line x1="181.7" y1="210.7" x2="199.7" y2="223.6" stroke="#ac3a14" stroke-width="0.7"/>
<line x1="182.7" y1="223.7" x2="201.7" y2="213.6" stroke="#ac3a14" stroke-width="0.7"/>
<line x1="201.7" y1="214.6" x2="214.9" y2="225.9" stroke="#ac3a14" stroke-width="0.7"/>
<line x1="201.7" y1="215.6" x2="219.8" y2="228.4" stroke="#ac3a14" stroke-width="0.7"/>
<line x1="202.7" y1="228.6" x2="221.8" y2="218.4" stroke="#ac3a14" stroke-width="0.7"/>
<line x1="221.8" y1="219.4" x2="234.9" y2="230.8" stroke="#ac3a14" stroke-width="0.7"/>
<line x1="221.8" y1="220.4" x2="239.8" y2="233.3" stroke="#ac3a14" stroke-width="0.7"/>
<line x1="222.8" y1="233.4" x2="241.8" y2="223.3" stroke="#ac3a14" stroke-width="0.7"/>
<line x1="61.3" y1="205.7" x2="74.5" y2="217.1" stroke="#ac3a14" stroke-width="0.7"/>
<line x1="61.3" y1="206.7" x2="79.4" y2="219.6" stroke="#ac3a14" stroke-width="0.7"/>
<line x1="62.3" y1="219.7" x2="81.4" y2="209.6" stroke="#ac3a14" stroke-width="0.7"/>
<line x1="81.4" y1="210.6" x2="94.5" y2="221.9" stroke="#ac3a14" stroke-width="0.7"/>
<line x1="81.4" y1="211.6" x2="99.4" y2="224.4" stroke="#ac3a14" stroke-width="0.7"/>
<line x1="82.4" y1="224.6" x2="101.4" y2="214.4" stroke="#ac3a14" stroke-width="0.7"/>
<line x1="101.4" y1="215.4" x2="114.6" y2="226.8" stroke="#ac3a14" stroke-width="0.7"/>
<line x1="101.4" y1="216.4" x2="119.5" y2="229.3" stroke="#ac3a14" stroke-width="0.7"/>
<line x1="102.4" y1="229.4" x2="121.5" y2="219.3" stroke="#ac3a14" stroke-width="0.7"/>
<line x1="121.5" y1="220.3" x2="134.6" y2="231.7" stroke="#ac3a14" stroke-width="0.7"/>
<line x1="121.5" y1="221.3" x2="139.5" y2="234.2" stroke="#ac3a14" stroke-width="0.7"/>
<line x1="122.5" y1="234.3" x2="141.5" y2="224.2" stroke="#ac3a14" stroke-width="0.7"/>
<line x1="141.5" y1="225.2" x2="154.7" y2="236.6" stroke="#ac3a14" stroke-width="0.7"/>
<line x1="141.5" y1="226.2" x2="159.6" y2="239.1" stroke="#ac3a14" stroke-width="0.7"/>
<line x1="142.5" y1="239.2" x2="161.6" y2="229.1" stroke="#ac3a14" stroke-width="0.7"/>
<line x1="161.6" y1="230.1" x2="174.8" y2="241.4" stroke="#ac3a14" stroke-width="0.7"/>
<line x1="161.6" y1="231.1" x2="179.7" y2="243.9" stroke="#ac3a14" stroke-width="0.7"/>
<line x1="162.6" y1="244.1" x2="181.7" y2="233.9" stroke="#ac3a14" stroke-width="0.7"/>
<line x1="181.7" y1="234.9" x2="194.8" y2="246.3" stroke="#ac3a14" stroke-width="0.7"/>
<line x1="181.7" y1="235.9" x2="199.7" y2="248.8" stroke="#ac3a14" stroke-width="0.7"/>
<line x1="182.7" y1="248.9" x2="201.7" y2="238.8" stroke="#ac3a14" stroke-width="0.7"/>
<line x1="201.7" y1="239.8" x2="214.9" y2="251.2" stroke="#ac3a14" stroke-width="0.7"/>
<line x1="201.7" y1="240.8" x2="219.8" y2="253.7" stroke="#ac3a14" stroke-width="0.7"/>
<line x1="202.7" y1="253.8" x2="221.8" y2="243.7" stroke="#ac3a14" stroke-width="0.7"/>
<line x1="221.8" y1="244.7" x2="234.9" y2="256.1" stroke="#ac3a14" stroke-width="0.7"/>
<line x1="221.8" y1="245.7" x2="239.8" y2="258.6" stroke="#ac3a14" stroke-width="0.7"/>
<line x1="222.8" y1="258.7" x2="241.8" y2="248.6" stroke="#ac3a14" stroke-width="0.7"/>
<line x1="61.3" y1="230.9" x2="74.5" y2="242.3" stroke="#ac3a14" stroke-width="0.7"/>
<line x1="61.3" y1="231.9" x2="79.4" y2="244.8" stroke="#ac3a14" stroke-width="0.7"/>
<line x1="62.3" y1="244.9" x2="81.4" y2="234.8" stroke="#ac3a14" stroke-width="0.7"/>
<line x1="81.4" y1="235.8" x2="94.5" y2="247.2" stroke="#ac3a14" stroke-width="0.7"/>
<line x1="81.4" y1="236.8" x2="99.4" y2="249.7" stroke="#ac3a14" stroke-width="0.7"/>
<line x1="82.4" y1="249.8" x2="101.4" y2="239.7" stroke="#ac3a14" stroke-width="0.7"/>
<line x1="101.4" y1="240.7" x2="114.6" y2="252.1" stroke="#ac3a14" stroke-width="0.7"/>
<line x1="101.4" y1="241.7" x2="119.5" y2="254.6" stroke="#ac3a14" stroke-width="0.7"/>
<line x1="102.4" y1="254.7" x2="121.5" y2="244.6" stroke="#ac3a14" stroke-width="0.7"/>
<line x1="121.5" y1="245.6" x2="134.6" y2="256.9" stroke="#ac3a14" stroke-width="0.7"/>
<line x1="121.5" y1="246.6" x2="139.5" y2="259.4" stroke="#ac3a14" stroke-width="0.7"/>
<line x1="122.5" y1="259.6" x2="141.5" y2="249.4" stroke="#ac3a14" stroke-width="0.7"/>
<line x1="141.5" y1="250.4" x2="154.7" y2="261.8" stroke="#ac3a14" stroke-width="0.7"/>
<line x1="141.5" y1="251.4" x2="159.6" y2="264.3" stroke="#ac3a14" stroke-width="0.7"/>
<line x1="142.5" y1="264.4" x2="161.6" y2="254.3" stroke="#ac3a14" stroke-width="0.7"/>
<line x1="161.6" y1="255.3" x2="174.8" y2="266.7" stroke="#ac3a14" stroke-width="0.7"/>
<line x1="161.6" y1="256.3" x2="179.7" y2="269.2" stroke="#ac3a14" stroke-width="0.7"/>
<line x1="162.6" y1="269.3" x2="181.7" y2="259.2" stroke="#ac3a14" stroke-width="0.7"/>
<line x1="181.7" y1="260.2" x2="194.8" y2="271.6" stroke="#ac3a14" stroke-width="0.7"/>
<line x1="181.7" y1="261.2" x2="199.7" y2="274.1" stroke="#ac3a14" stroke-width="0.7"/>
<line x1="182.7" y1="274.2" x2="201.7" y2="264.1" stroke="#ac3a14" stroke-width="0.7"/>
<line x1="201.7" y1="265.1" x2="214.9" y2="276.5" stroke="#ac3a14" stroke-width="0.7"/>
<line x1="201.7" y1="266.1" x2="219.8" y2="279.0" stroke="#ac3a14" stroke-width="0.7"/>
<line x1="202.7" y1="279.1" x2="221.8" y2="269.0" stroke="#ac3a14" stroke-width="0.7"/>
<line x1="221.8" y1="270.0" x2="234.9" y2="281.4" stroke="#ac3a14" stroke-width="0.7"/>
<line x1="221.8" y1="271.0" x2="239.8" y2="283.9" stroke="#ac3a14" stroke-width="0.7"/>
<line x1="222.8" y1="284.0" x2="241.8" y2="273.9" stroke="#ac3a14" stroke-width="0.7"/>
<line x1="61.3" y1="256.1" x2="74.5" y2="267.5" stroke="#ac3a14" stroke-width="0.7"/>
<line x1="61.3" y1="257.1" x2="79.4" y2="270.0" stroke="#ac3a14" stroke-width="0.7"/>
<line x1="62.3" y1="270.1" x2="81.4" y2="260.0" stroke="#ac3a14" stroke-width="0.7"/>
<line x1="81.4" y1="261.0" x2="94.5" y2="272.4" stroke="#ac3a14" stroke-width="0.7"/>
<line x1="81.4" y1="262.0" x2="99.4" y2="274.9" stroke="#ac3a14" stroke-width="0.7"/>
<line x1="82.4" y1="275.0" x2="101.4" y2="264.9" stroke="#ac3a14" stroke-width="0.7"/>
<line x1="101.4" y1="265.9" x2="114.6" y2="277.3" stroke="#ac3a14" stroke-width="0.7"/>
<line x1="101.4" y1="266.9" x2="119.5" y2="279.8" stroke="#ac3a14" stroke-width="0.7"/>
<line x1="102.4" y1="279.9" x2="121.5" y2="269.8" stroke="#ac3a14" stroke-width="0.7"/>
<line x1="121.5" y1="270.8" x2="134.6" y2="282.2" stroke="#ac3a14" stroke-width="0.7"/>
<line x1="121.5" y1="271.8" x2="139.5" y2="284.7" stroke="#ac3a14" stroke-width="0.7"/>
<line x1="122.5" y1="284.8" x2="141.5" y2="274.7" stroke="#ac3a14" stroke-width="0.7"/>
<line x1="141.5" y1="275.7" x2="154.7" y2="287.1" stroke="#ac3a14" stroke-width="0.7"/>
<line x1="141.5" y1="276.7" x2="159.6" y2="289.6" stroke="#ac3a14" stroke-width="0.7"/>
<line x1="142.5" y1="289.7" x2="161.6" y2="279.6" stroke="#ac3a14" stroke-width="0.7"/>
<line x1="161.6" y1="280.6" x2="174.8" y2="292.0" stroke="#ac3a14" stroke-width="0.7"/>
<line x1="161.6" y1="281.6" x2="179.7" y2="294.5" stroke="#ac3a14" stroke-width="0.7"/>
<line x1="162.6" y1="294.6" x2="181.7" y2="284.5" stroke="#ac3a14" stroke-width="0.7"/>
<line x1="181.7" y1="285.5" x2="194.8" y2="296.8" stroke="#ac3a14" stroke-width="0.7"/>
<line x1="181.7" y1="286.5" x2="199.7" y2="299.3" stroke="#ac3a14" stroke-width="0.7"/>
<line x1="182.7" y1="299.5" x2="201.7" y2="289.3" stroke="#ac3a14" stroke-width="0.7"/>
<line x1="201.7" y1="290.3" x2="214.9" y2="301.7" stroke="#ac3a14" stroke-width="0.7"/>
<line x1="201.7" y1="291.3" x2="219.8" y2="304.2" stroke="#ac3a14" stroke-width="0.7"/>
<line x1="202.7" y1="304.3" x2="221.8" y2="294.2" stroke="#ac3a14" stroke-width="0.7"/>
<line x1="221.8" y1="295.2" x2="234.9" y2="306.6" stroke="#ac3a14" stroke-width="0.7"/>
<line x1="221.8" y1="296.2" x2="239.8" y2="309.1" stroke="#ac3a14" stroke-width="0.7"/>
<line x1="222.8" y1="309.2" x2="241.8" y2="299.1" stroke="#ac3a14" stroke-width="0.7"/>
<line x1="61.3" y1="103.6" x2="61.3" y2="288.2" stroke="#b64018" stroke-width="0.95"/>
<line x1="54.4" y1="109.1" x2="54.4" y2="298.7" stroke="#b64018" stroke-width="0.95"/>
<line x1="81.4" y1="108.4" x2="81.4" y2="284.1" stroke="#b64018" stroke-width="0.95"/>
<line x1="74.5" y1="137.4" x2="74.5" y2="290.6" stroke="#b64018" stroke-width="0.95"/>
<line x1="101.4" y1="113.3" x2="101.4" y2="289.0" stroke="#b64018" stroke-width="0.95"/>
<line x1="94.5" y1="142.3" x2="94.5" y2="295.5" stroke="#b64018" stroke-width="0.95"/>
<line x1="121.5" y1="118.1" x2="121.5" y2="293.9" stroke="#b64018" stroke-width="0.95"/>
<line x1="114.6" y1="123.6" x2="114.6" y2="300.4" stroke="#b64018" stroke-width="0.95"/>
<line x1="141.5" y1="123.0" x2="141.5" y2="298.8" stroke="#b64018" stroke-width="0.95"/>
<line x1="134.6" y1="152.0" x2="134.6" y2="305.3" stroke="#b64018" stroke-width="0.95"/>
<line x1="161.6" y1="127.8" x2="161.6" y2="303.7" stroke="#b64018" stroke-width="0.95"/>
<line x1="154.7" y1="133.3" x2="154.7" y2="310.2" stroke="#b64018" stroke-width="0.95"/>
<line x1="181.7" y1="132.6" x2="181.7" y2="308.6" stroke="#b64018" stroke-width="0.95"/>
<line x1="174.8" y1="161.7" x2="174.8" y2="315.1" stroke="#b64018" stroke-width="0.95"/>
<line x1="201.7" y1="137.5" x2="201.7" y2="313.5" stroke="#b64018" stroke-width="0.95"/>
<line x1="194.8" y1="143.0" x2="194.8" y2="320.0" stroke="#b64018" stroke-width="0.95"/>
<line x1="221.8" y1="142.3" x2="221.8" y2="318.4" stroke="#b64018" stroke-width="0.95"/>
<line x1="214.9" y1="171.4" x2="214.9" y2="324.9" stroke="#b64018" stroke-width="0.95"/>
<line x1="241.8" y1="147.2" x2="241.8" y2="323.3" stroke="#b64018" stroke-width="0.95"/>
<line x1="234.9" y1="152.7" x2="234.9" y2="329.8" stroke="#b64018" stroke-width="0.95"/>
<line x1="54.4" y1="135.6" x2="81.4" y2="134.9" stroke="#ac3a14" stroke-width="0.75"/>
<line x1="81.4" y1="134.9" x2="74.5" y2="140.4" stroke="#ac3a14" stroke-width="0.8"/>
<line x1="74.5" y1="140.4" x2="101.4" y2="139.8" stroke="#ac3a14" stroke-width="0.75"/>
<line x1="101.4" y1="139.8" x2="94.5" y2="145.3" stroke="#ac3a14" stroke-width="0.8"/>
<line x1="94.5" y1="145.3" x2="121.5" y2="144.6" stroke="#ac3a14" stroke-width="0.75"/>
<line x1="121.5" y1="144.6" x2="114.6" y2="150.1" stroke="#ac3a14" stroke-width="0.8"/>
<line x1="114.6" y1="150.1" x2="141.5" y2="149.5" stroke="#ac3a14" stroke-width="0.75"/>
<line x1="141.5" y1="149.5" x2="134.6" y2="155.0" stroke="#ac3a14" stroke-width="0.8"/>
<line x1="134.6" y1="155.0" x2="161.6" y2="154.3" stroke="#ac3a14" stroke-width="0.75"/>
<line x1="161.6" y1="154.3" x2="154.7" y2="159.8" stroke="#ac3a14" stroke-width="0.8"/>
<line x1="154.7" y1="159.8" x2="181.7" y2="159.2" stroke="#ac3a14" stroke-width="0.75"/>
<line x1="181.7" y1="159.2" x2="174.8" y2="164.7" stroke="#ac3a14" stroke-width="0.8"/>
<line x1="174.8" y1="164.7" x2="201.7" y2="164.0" stroke="#ac3a14" stroke-width="0.75"/>
<line x1="201.7" y1="164.0" x2="194.8" y2="169.5" stroke="#ac3a14" stroke-width="0.8"/>
<line x1="194.8" y1="169.5" x2="221.8" y2="168.9" stroke="#ac3a14" stroke-width="0.75"/>
<line x1="221.8" y1="168.9" x2="214.9" y2="174.4" stroke="#ac3a14" stroke-width="0.8"/>
<line x1="214.9" y1="174.4" x2="241.8" y2="173.7" stroke="#ac3a14" stroke-width="0.75"/>
<line x1="241.8" y1="173.7" x2="234.9" y2="179.2" stroke="#ac3a14" stroke-width="0.8"/>
<line x1="61.3" y1="130.1" x2="54.4" y2="135.6" stroke="#ac3a14" stroke-width="0.8"/>
<line x1="54.4" y1="160.8" x2="81.4" y2="160.2" stroke="#ac3a14" stroke-width="0.75"/>
<line x1="81.4" y1="160.2" x2="74.5" y2="165.7" stroke="#ac3a14" stroke-width="0.8"/>
<line x1="74.5" y1="165.7" x2="101.4" y2="165.0" stroke="#ac3a14" stroke-width="0.75"/>
<line x1="101.4" y1="165.0" x2="94.5" y2="170.5" stroke="#ac3a14" stroke-width="0.8"/>
<line x1="94.5" y1="170.5" x2="121.5" y2="169.9" stroke="#ac3a14" stroke-width="0.75"/>
<line x1="121.5" y1="169.9" x2="114.6" y2="175.4" stroke="#ac3a14" stroke-width="0.8"/>
<line x1="114.6" y1="175.4" x2="141.5" y2="174.7" stroke="#ac3a14" stroke-width="0.75"/>
<line x1="141.5" y1="174.7" x2="134.6" y2="180.2" stroke="#ac3a14" stroke-width="0.8"/>
<line x1="134.6" y1="180.2" x2="161.6" y2="179.6" stroke="#ac3a14" stroke-width="0.75"/>
<line x1="161.6" y1="179.6" x2="154.7" y2="185.1" stroke="#ac3a14" stroke-width="0.8"/>
<line x1="154.7" y1="185.1" x2="181.7" y2="184.4" stroke="#ac3a14" stroke-width="0.75"/>
<line x1="181.7" y1="184.4" x2="174.8" y2="189.9" stroke="#ac3a14" stroke-width="0.8"/>
<line x1="174.8" y1="189.9" x2="201.7" y2="189.3" stroke="#ac3a14" stroke-width="0.75"/>
<line x1="201.7" y1="189.3" x2="194.8" y2="194.8" stroke="#ac3a14" stroke-width="0.8"/>
<line x1="194.8" y1="194.8" x2="221.8" y2="194.2" stroke="#ac3a14" stroke-width="0.75"/>
<line x1="221.8" y1="194.2" x2="214.9" y2="199.7" stroke="#ac3a14" stroke-width="0.8"/>
<line x1="214.9" y1="199.7" x2="241.8" y2="199.0" stroke="#ac3a14" stroke-width="0.75"/>
<line x1="241.8" y1="199.0" x2="234.9" y2="204.5" stroke="#ac3a14" stroke-width="0.8"/>
<line x1="61.3" y1="155.3" x2="54.4" y2="160.8" stroke="#ac3a14" stroke-width="0.8"/>
<line x1="54.4" y1="186.0" x2="81.4" y2="185.4" stroke="#ac3a14" stroke-width="0.75"/>
<line x1="81.4" y1="185.4" x2="74.5" y2="190.9" stroke="#ac3a14" stroke-width="0.8"/>
<line x1="74.5" y1="190.9" x2="101.4" y2="190.2" stroke="#ac3a14" stroke-width="0.75"/>
<line x1="101.4" y1="190.2" x2="94.5" y2="195.7" stroke="#ac3a14" stroke-width="0.8"/>
<line x1="94.5" y1="195.7" x2="121.5" y2="195.1" stroke="#ac3a14" stroke-width="0.75"/>
<line x1="121.5" y1="195.1" x2="114.6" y2="200.6" stroke="#ac3a14" stroke-width="0.8"/>
<line x1="114.6" y1="200.6" x2="141.5" y2="200.0" stroke="#ac3a14" stroke-width="0.75"/>
<line x1="141.5" y1="200.0" x2="134.6" y2="205.5" stroke="#ac3a14" stroke-width="0.8"/>
<line x1="134.6" y1="205.5" x2="161.6" y2="204.8" stroke="#ac3a14" stroke-width="0.75"/>
<line x1="161.6" y1="204.8" x2="154.7" y2="210.3" stroke="#ac3a14" stroke-width="0.8"/>
<line x1="154.7" y1="210.3" x2="181.7" y2="209.7" stroke="#ac3a14" stroke-width="0.75"/>
<line x1="181.7" y1="209.7" x2="174.8" y2="215.2" stroke="#ac3a14" stroke-width="0.8"/>
<line x1="174.8" y1="215.2" x2="201.7" y2="214.6" stroke="#ac3a14" stroke-width="0.75"/>
<line x1="201.7" y1="214.6" x2="194.8" y2="220.1" stroke="#ac3a14" stroke-width="0.8"/>
<line x1="194.8" y1="220.1" x2="221.8" y2="219.4" stroke="#ac3a14" stroke-width="0.75"/>
<line x1="221.8" y1="219.4" x2="214.9" y2="224.9" stroke="#ac3a14" stroke-width="0.8"/>
<line x1="214.9" y1="224.9" x2="241.8" y2="224.3" stroke="#ac3a14" stroke-width="0.75"/>
<line x1="241.8" y1="224.3" x2="234.9" y2="229.8" stroke="#ac3a14" stroke-width="0.8"/>
<line x1="61.3" y1="180.5" x2="54.4" y2="186.0" stroke="#ac3a14" stroke-width="0.8"/>
<line x1="54.4" y1="211.2" x2="81.4" y2="210.6" stroke="#ac3a14" stroke-width="0.75"/>
<line x1="81.4" y1="210.6" x2="74.5" y2="216.1" stroke="#ac3a14" stroke-width="0.8"/>
<line x1="74.5" y1="216.1" x2="101.4" y2="215.4" stroke="#ac3a14" stroke-width="0.75"/>
<line x1="101.4" y1="215.4" x2="94.5" y2="220.9" stroke="#ac3a14" stroke-width="0.8"/>
<line x1="94.5" y1="220.9" x2="121.5" y2="220.3" stroke="#ac3a14" stroke-width="0.75"/>
<line x1="121.5" y1="220.3" x2="114.6" y2="225.8" stroke="#ac3a14" stroke-width="0.8"/>
<line x1="114.6" y1="225.8" x2="141.5" y2="225.2" stroke="#ac3a14" stroke-width="0.75"/>
<line x1="141.5" y1="225.2" x2="134.6" y2="230.7" stroke="#ac3a14" stroke-width="0.8"/>
<line x1="134.6" y1="230.7" x2="161.6" y2="230.1" stroke="#ac3a14" stroke-width="0.75"/>
<line x1="161.6" y1="230.1" x2="154.7" y2="235.6" stroke="#ac3a14" stroke-width="0.8"/>
<line x1="154.7" y1="235.6" x2="181.7" y2="234.9" stroke="#ac3a14" stroke-width="0.75"/>
<line x1="181.7" y1="234.9" x2="174.8" y2="240.4" stroke="#ac3a14" stroke-width="0.8"/>
<line x1="174.8" y1="240.4" x2="201.7" y2="239.8" stroke="#ac3a14" stroke-width="0.75"/>
<line x1="201.7" y1="239.8" x2="194.8" y2="245.3" stroke="#ac3a14" stroke-width="0.8"/>
<line x1="194.8" y1="245.3" x2="221.8" y2="244.7" stroke="#ac3a14" stroke-width="0.75"/>
<line x1="221.8" y1="244.7" x2="214.9" y2="250.2" stroke="#ac3a14" stroke-width="0.8"/>
<line x1="214.9" y1="250.2" x2="241.8" y2="249.6" stroke="#ac3a14" stroke-width="0.75"/>
<line x1="241.8" y1="249.6" x2="234.9" y2="255.1" stroke="#ac3a14" stroke-width="0.8"/>
<line x1="61.3" y1="205.7" x2="54.4" y2="211.2" stroke="#ac3a14" stroke-width="0.8"/>
<line x1="54.4" y1="236.4" x2="81.4" y2="235.8" stroke="#ac3a14" stroke-width="0.75"/>
<line x1="81.4" y1="235.8" x2="74.5" y2="241.3" stroke="#ac3a14" stroke-width="0.8"/>
<line x1="74.5" y1="241.3" x2="101.4" y2="240.7" stroke="#ac3a14" stroke-width="0.75"/>
<line x1="101.4" y1="240.7" x2="94.5" y2="246.2" stroke="#ac3a14" stroke-width="0.8"/>
<line x1="94.5" y1="246.2" x2="121.5" y2="245.6" stroke="#ac3a14" stroke-width="0.75"/>
<line x1="121.5" y1="245.6" x2="114.6" y2="251.1" stroke="#ac3a14" stroke-width="0.8"/>
<line x1="114.6" y1="251.1" x2="141.5" y2="250.4" stroke="#ac3a14" stroke-width="0.75"/>
<line x1="141.5" y1="250.4" x2="134.6" y2="255.9" stroke="#ac3a14" stroke-width="0.8"/>
<line x1="134.6" y1="255.9" x2="161.6" y2="255.3" stroke="#ac3a14" stroke-width="0.75"/>
<line x1="161.6" y1="255.3" x2="154.7" y2="260.8" stroke="#ac3a14" stroke-width="0.8"/>
<line x1="154.7" y1="260.8" x2="181.7" y2="260.2" stroke="#ac3a14" stroke-width="0.75"/>
<line x1="181.7" y1="260.2" x2="174.8" y2="265.7" stroke="#ac3a14" stroke-width="0.8"/>
<line x1="174.8" y1="265.7" x2="201.7" y2="265.1" stroke="#ac3a14" stroke-width="0.75"/>
<line x1="201.7" y1="265.1" x2="194.8" y2="270.6" stroke="#ac3a14" stroke-width="0.8"/>
<line x1="194.8" y1="270.6" x2="221.8" y2="270.0" stroke="#ac3a14" stroke-width="0.75"/>
<line x1="221.8" y1="270.0" x2="214.9" y2="275.5" stroke="#ac3a14" stroke-width="0.8"/>
<line x1="214.9" y1="275.5" x2="241.8" y2="274.9" stroke="#ac3a14" stroke-width="0.75"/>
<line x1="241.8" y1="274.9" x2="234.9" y2="280.4" stroke="#ac3a14" stroke-width="0.8"/>
<line x1="61.3" y1="230.9" x2="54.4" y2="236.4" stroke="#ac3a14" stroke-width="0.8"/>
<line x1="54.4" y1="261.6" x2="81.4" y2="261.0" stroke="#ac3a14" stroke-width="0.75"/>
<line x1="81.4" y1="261.0" x2="74.5" y2="266.5" stroke="#ac3a14" stroke-width="0.8"/>
<line x1="74.5" y1="266.5" x2="101.4" y2="265.9" stroke="#ac3a14" stroke-width="0.75"/>
<line x1="101.4" y1="265.9" x2="94.5" y2="271.4" stroke="#ac3a14" stroke-width="0.8"/>
<line x1="94.5" y1="271.4" x2="121.5" y2="270.8" stroke="#ac3a14" stroke-width="0.75"/>
<line x1="121.5" y1="270.8" x2="114.6" y2="276.3" stroke="#ac3a14" stroke-width="0.8"/>
<line x1="114.6" y1="276.3" x2="141.5" y2="275.7" stroke="#ac3a14" stroke-width="0.75"/>
<line x1="141.5" y1="275.7" x2="134.6" y2="281.2" stroke="#ac3a14" stroke-width="0.8"/>
<line x1="134.6" y1="281.2" x2="161.6" y2="280.6" stroke="#ac3a14" stroke-width="0.75"/>
<line x1="161.6" y1="280.6" x2="154.7" y2="286.1" stroke="#ac3a14" stroke-width="0.8"/>
<line x1="154.7" y1="286.1" x2="181.7" y2="285.5" stroke="#ac3a14" stroke-width="0.75"/>
<line x1="181.7" y1="285.5" x2="174.8" y2="291.0" stroke="#ac3a14" stroke-width="0.8"/>
<line x1="174.8" y1="291.0" x2="201.7" y2="290.3" stroke="#ac3a14" stroke-width="0.75"/>
<line x1="201.7" y1="290.3" x2="194.8" y2="295.8" stroke="#ac3a14" stroke-width="0.8"/>
<line x1="194.8" y1="295.8" x2="221.8" y2="295.2" stroke="#ac3a14" stroke-width="0.75"/>
<line x1="221.8" y1="295.2" x2="214.9" y2="300.7" stroke="#ac3a14" stroke-width="0.8"/>
<line x1="214.9" y1="300.7" x2="241.8" y2="300.1" stroke="#ac3a14" stroke-width="0.75"/>
<line x1="241.8" y1="300.1" x2="234.9" y2="305.6" stroke="#ac3a14" stroke-width="0.8"/>
<line x1="61.3" y1="256.1" x2="54.4" y2="261.6" stroke="#ac3a14" stroke-width="0.8"/>
<line x1="28.9" y1="138.1" x2="54.4" y2="123.5" stroke="#ac3a14" stroke-width="0.85"/>
<line x1="28.9" y1="143.6" x2="54.4" y2="129.0" stroke="#ac3a14" stroke-width="0.85"/>
<line x1="28.9" y1="163.3" x2="54.4" y2="148.7" stroke="#ac3a14" stroke-width="0.85"/>
<line x1="28.9" y1="168.8" x2="54.4" y2="154.2" stroke="#ac3a14" stroke-width="0.85"/>
<line x1="28.9" y1="188.5" x2="54.4" y2="173.9" stroke="#ac3a14" stroke-width="0.85"/>
<line x1="28.9" y1="194.0" x2="54.4" y2="179.4" stroke="#ac3a14" stroke-width="0.85"/>
<line x1="28.9" y1="213.7" x2="54.4" y2="199.1" stroke="#ac3a14" stroke-width="0.85"/>
<line x1="28.9" y1="219.2" x2="54.4" y2="204.6" stroke="#ac3a14" stroke-width="0.85"/>
<line x1="28.9" y1="238.9" x2="54.4" y2="224.3" stroke="#ac3a14" stroke-width="0.85"/>
<line x1="28.9" y1="244.4" x2="54.4" y2="229.8" stroke="#ac3a14" stroke-width="0.85"/>
<line x1="28.9" y1="264.1" x2="54.4" y2="249.5" stroke="#ac3a14" stroke-width="0.85"/>
<line x1="28.9" y1="269.6" x2="54.4" y2="255.0" stroke="#ac3a14" stroke-width="0.85"/>
<line x1="28.9" y1="289.3" x2="54.4" y2="274.7" stroke="#ac3a14" stroke-width="0.85"/>
<line x1="28.9" y1="294.8" x2="54.4" y2="280.2" stroke="#ac3a14" stroke-width="0.85"/>
<line x1="28.9" y1="153.9" x2="40.3" y2="154.9" stroke="#ac3a14" stroke-width="0.8"/>
<line x1="40.3" y1="147.5" x2="54.4" y2="147.5" stroke="#ac3a14" stroke-width="0.8"/>
<line x1="40.3" y1="153.3" x2="54.4" y2="135.8" stroke="#ac3a14" stroke-width="0.7"/>
<line x1="28.9" y1="161.1" x2="40.3" y2="144.3" stroke="#ac3a14" stroke-width="0.7"/>
<line x1="28.9" y1="179.1" x2="40.3" y2="180.1" stroke="#ac3a14" stroke-width="0.8"/>
<line x1="40.3" y1="172.7" x2="54.4" y2="172.7" stroke="#ac3a14" stroke-width="0.8"/>
<line x1="40.3" y1="178.5" x2="54.4" y2="161.0" stroke="#ac3a14" stroke-width="0.7"/>
<line x1="28.9" y1="186.3" x2="40.3" y2="169.5" stroke="#ac3a14" stroke-width="0.7"/>
<line x1="28.9" y1="204.3" x2="40.3" y2="205.3" stroke="#ac3a14" stroke-width="0.8"/>
<line x1="40.3" y1="197.9" x2="54.4" y2="197.9" stroke="#ac3a14" stroke-width="0.8"/>
<line x1="40.3" y1="203.7" x2="54.4" y2="186.2" stroke="#ac3a14" stroke-width="0.7"/>
<line x1="28.9" y1="211.5" x2="40.3" y2="194.7" stroke="#ac3a14" stroke-width="0.7"/>
<line x1="28.9" y1="229.5" x2="40.3" y2="230.5" stroke="#ac3a14" stroke-width="0.8"/>
<line x1="40.3" y1="223.1" x2="54.4" y2="223.1" stroke="#ac3a14" stroke-width="0.8"/>
<line x1="40.3" y1="228.9" x2="54.4" y2="211.4" stroke="#ac3a14" stroke-width="0.7"/>
<line x1="28.9" y1="236.7" x2="40.3" y2="219.9" stroke="#ac3a14" stroke-width="0.7"/>
<line x1="28.9" y1="254.7" x2="40.3" y2="255.7" stroke="#ac3a14" stroke-width="0.8"/>
<line x1="40.3" y1="248.3" x2="54.4" y2="248.3" stroke="#ac3a14" stroke-width="0.8"/>
<line x1="40.3" y1="254.1" x2="54.4" y2="236.6" stroke="#ac3a14" stroke-width="0.7"/>
<line x1="28.9" y1="261.9" x2="40.3" y2="245.1" stroke="#ac3a14" stroke-width="0.7"/>
<line x1="28.9" y1="279.9" x2="40.3" y2="280.9" stroke="#ac3a14" stroke-width="0.8"/>
<line x1="40.3" y1="273.5" x2="54.4" y2="273.5" stroke="#ac3a14" stroke-width="0.8"/>
<line x1="40.3" y1="279.3" x2="54.4" y2="261.8" stroke="#ac3a14" stroke-width="0.7"/>
<line x1="28.9" y1="287.1" x2="40.3" y2="270.3" stroke="#ac3a14" stroke-width="0.7"/>
<line x1="40.3" y1="117.6" x2="40.3" y2="306.3" stroke="#b64018" stroke-width="0.95"/>
<line x1="28.9" y1="126.4" x2="28.9" y2="302.7" stroke="#b64018" stroke-width="0.95"/>
      </g>
      <g transform="translate(36.3,426.4)"><g transform="scale(1.0)" filter="url(#soft)">
<path d="M-2.4,-3.2 L-21.3,-8.2 L-20.7,-10.5 L-34.5,-9.2 L-23.1,-1.3 L-22.5,-3.7 L-3.6,1.2Z" fill="#16b416"/>
<path d="M2.1,-3.0 L2.1,-23.5 L4.2,-23.5 L0.0,-37.0 L-4.2,-23.5 L-2.1,-23.5 L-2.1,-3.0Z" fill="#1616dc"/>
<path d="M4.4,-1.0 L14.8,-8.1 L16.0,-6.4 L20.9,-15.2 L10.9,-13.8 L12.1,-12.1 L1.6,-5.0Z" fill="#e01212"/>
<path d="M-5.4,-3.5 L0.5,-5.6 L5.4,-3.4 L5.4,3.4 L-0.5,5.6 L-5.4,3.2Z" fill="#ffffff"/>
<path d="M-5.4,-3.5 L-0.5,-1.2 L5.4,-3.4 M-0.5,-1.2 L-0.5,5.6" stroke="#c4c4c4" stroke-width="0.7" fill="none"/>
</g></g>
      </svg>
    </div>
    <div class="abs" style="left:6px;top:453px;width:270px;height:15px;background:#ececec;border-top:1px solid #c9c9c9"></div>
    <div class="tab" style="left:5px;top:453px;width:34px;height:15px;line-height:14px;padding-left:3px"><span>Modello</span></div>
  </div>
</div>
<!-- gap line between MDI and right panel -->
<div class="abs" style="left:596px;top:62px;width:3px;height:478px;background:#f4f3ee"></div>
<!-- COMMAND PANEL -->
<div class="abs" style="left:21px;top:540px;width:577px;height:77px;background:#efede4"></div>
<div class="abs" style="left:21px;top:541.5px;width:575px;height:9.5px;background:linear-gradient(180deg,#d3dce8,#dbe4ef 50%,#cfd9e6);border:1px solid #b7c2d0"></div>
<div class="abs" style="left:21px;top:551px;width:575px;height:54px;background:#fff;border:1px solid #c8ccd4;border-top:none"></div>
<div class="abs" style="left:23px;top:553px;font-size:8.6px;line-height:10px;white-space:nowrap;color:#111"><span class="sx">Selezionare entità [Tutte/Precedenti/Ultima] (1 selezionata):</span></div>
<div class="abs" style="left:23px;top:569px;font-size:8.6px;line-height:10px;white-space:nowrap;color:#111"><span class="sx">Comando: SALVA COMMESSA</span></div>
<div class="abs" style="left:23px;top:577px;font-size:8.6px;line-height:10px;white-space:nowrap;color:#111"><span class="sx">Salvataggio in "C:\Users\Gianni\Desktop\Nuovacommessa" in corso...</span></div>
<div class="abs" style="left:23px;top:593px;font-size:8.6px;line-height:10px;white-space:nowrap;color:#111"><span class="sx">Comando:</span></div>
<!-- scrollbar of cmd -->
<div class="abs" style="left:585px;top:552px;width:10px;height:52px;background:#f2f2f2"></div>
<div class="abs" style="left:588px;top:556px;border-left:2px solid transparent;border-right:2px solid transparent;border-bottom:3px solid #444;width:0;height:0"></div>
<div class="abs" style="left:588px;top:596px;border-left:2px solid transparent;border-right:2px solid transparent;border-top:3px solid #444;width:0;height:0"></div>
<div class="abs" style="left:586px;top:582px;width:8px;height:9px;background:linear-gradient(90deg,#f4f4f4,#dcdcdc);border:1px solid #8c8c8c;border-radius:1px"></div>
<!-- bottom tab row -->
<div class="abs" style="left:21px;top:605px;width:577px;height:12px;background:#fbfbfa"></div>
<div class="abs" style="left:21px;top:605px;width:129px;height:11px;background:#e3e9f2;border:1px solid #b9c4d4"></div>
<div class="abs" style="left:33px;top:605px;width:80px;height:11px;background:#f4f6fa;border:1px solid #b9c4d4"></div>
<div class="abs" style="left:125.5px;top:606px;width:1px;height:9px;background:#b9c4d4"></div>
<div class="abs" style="left:137px;top:606px;width:1px;height:9px;background:#b9c4d4"></div>
<div class="ic"  style="left:22.0px;top:604.5px"><svg viewBox="0 0 14 14"><rect x="2" y="3" width="7" height="8" fill="#e02020"/><path d="M11.5,3V8.5M11.5,10.5V11.5" stroke="#e02020" stroke-width="1.4"/></svg></div><div class="ic"  style="left:33.0px;top:604.5px"><svg viewBox="0 0 14 14"><path d="M2,11L5.5,3L9,11M3.5,8H7.5M5.5,3V12" stroke="#2a3cd8" stroke-width="1.1" fill="none"/><path d="M11.5,3V8.5M11.5,10.5V11.5" stroke="#e02020" stroke-width="1.4"/></svg></div><div class="ic"  style="left:113.0px;top:604.5px"><svg viewBox="0 0 14 14"><path d="M2,7L6,3L10,7L6,11Z" fill="#3a6ad8"/><circle cx="6" cy="7" r="1.7" fill="#46c03a"/><path d="M11.5,3V8.5M11.5,10.5V11.5" stroke="#e8c020" stroke-width="1.4"/></svg></div><div class="ic"  style="left:125.0px;top:604.5px"><svg viewBox="0 0 14 14"><path d="M2,11V5L4,3H5L6,5V11ZM7,11V5L8,3H9L10.5,5V11Z" fill="#222"/><path d="M12,3V8.5M12,10.5V11.5" stroke="#e02020" stroke-width="1.3"/></svg></div><div class="ic"  style="left:137.0px;top:604.5px"><svg viewBox="0 0 14 14"><path d="M2,12C3,8 5,5 8,4" stroke="#222" stroke-width="1.2" fill="none"/><circle cx="10" cy="3" r="1" fill="#222"/><circle cx="12.5" cy="3" r="0.9" fill="#222"/><circle cx="10" cy="6" r="0.9" fill="#222"/><circle cx="12.5" cy="6" r="0.9" fill="#222"/></svg></div>
<div class="abs" style="left:46.5px;top:605.5px;font-size:8.6px;line-height:10px;white-space:nowrap;"><span class="sx" style="font-size:9px;transform:scaleX(.775)">Note di modellazione</span></div>
<!-- RIGHT PANEL -->
<div class="abs" style="left:599px;top:62px;width:189px;height:555px;background:#f0efe9"></div>
<div class="phead" style="left:599px;top:62px;width:189px"><span class="sx">Proprietà</span><i style="left:171px"><svg width="8" height="8" viewBox="0 0 8 8"><rect x="0.3" y="0.3" width="7.4" height="7.4" fill="#bfc4cb" stroke="#aab0b9" stroke-width="0.5"/><path d="M1.5,6.5L3.5,4.5M2.5,2.5L5.5,5.5M3.5,1.5L6.5,4.5L5,5L3,3Z" stroke="#fff" stroke-width="0.9" fill="#fff"/></svg></i><i style="left:179px"><svg width="9" height="8" viewBox="0 0 9 8"><rect x="0.3" y="0.3" width="8.4" height="7.4" fill="#8f6a72" stroke="#7a5a62" stroke-width="0.6"/><path d="M2.5,2L6.5,6M6.5,2L2.5,6" stroke="#f4dada" stroke-width="1.3"/></svg></i></div>
<div class="abs" style="left:599px;top:73px;width:189px;height:13px;background:linear-gradient(180deg,#f6f6f6,#e9e9e9 50%,#dcdcdc);border:1px solid #9a9a9a;border-radius:1px;font-size:8.6px;line-height:11px;padding-left:2px;"><span class="sx">Colonna in acciaio</span><div class="abs" style="left:181px;top:4px;border-left:2.5px solid transparent;border-right:2.5px solid transparent;border-top:3px solid #111;width:0;height:0"></div></div>
<div class="abs" style="left:599px;top:87px;width:179px;height:208px;background:#fff;overflow:hidden">
  <div class="abs" style="left:0;top:0;width:9px;height:208px;background:#c9c9c9"></div><div class="abs" style="left:9px;top:0;width:170px;height:1px;background:#d9d9d9"></div>
<div class="prow" style="top:0.90px"><span class="n" style="left:10px">Tronco</span><span class="v">Fondazione - Piano 1</span></div>
<div class="prow" style="top:10.74px"><svg class="abs" style="left:1px;top:1.5px" width="7" height="7" viewBox="0 0 7 7"><rect x="0.5" y="0.5" width="6" height="6" fill="#fff" stroke="#4a4a4a" stroke-width="0.9"/><path d="M1.8,3.5H5.2" stroke="#111" stroke-width="0.9"/></svg><span class="n" style="left:10px">Sezione</span><span class="v">OC 60x3.91</span></div>
<div class="prow" style="top:20.58px"><span class="n" style="left:19px">Tipo</span><span class="bx"></span><span class="v" style="left:108px">Semplice</span></div>
<div class="prow" style="top:30.42px"><span class="n" style="left:19px">Profilo</span><span class="bx"></span><span class="abs" style="left:95.5px;top:2px;width:5px;height:5px;border:1px solid #222;border-radius:3px"></span><span class="v" style="left:108px">OC 60x3.91</span></div>
<div class="prow" style="top:40.26px"><svg class="abs" style="left:10px;top:1.5px" width="7" height="7" viewBox="0 0 7 7"><rect x="0.5" y="0.5" width="6" height="6" fill="#fff" stroke="#4a4a4a" stroke-width="0.9"/><path d="M1.8,3.5H5.2M3.5,1.8V5.2" stroke="#111" stroke-width="0.9"/></svg><span class="n" style="left:19px">Statici</span><span class="v">OC 60x3.91</span></div>
<div class="prow" style="top:50.10px"><span class="n" style="left:10px">Punto di inserimento</span><span class="bx"></span><span class="abs" style="left:95.5px;top:2px;width:5px;height:5px;border:1px solid #222;border-radius:3px"></span><span class="v" style="left:108px">Centro-centro</span></div>
<div class="prow" style="top:59.94px"><svg class="abs" style="left:1px;top:1.5px" width="7" height="7" viewBox="0 0 7 7"><rect x="0.5" y="0.5" width="6" height="6" fill="#fff" stroke="#4a4a4a" stroke-width="0.9"/><path d="M1.8,3.5H5.2M3.5,1.8V5.2" stroke="#111" stroke-width="0.9"/></svg><span class="n" style="left:10px">Punto</span><span class="v" style="transform:scaleX(.885)">1169.2; -981.1</span></div>
<div class="prow" style="top:69.78px"><span class="n" style="left:10px">Angolo</span><span class="v" style="transform:scaleX(.885)">270</span></div>
<div class="prow" style="top:79.62px"><span class="n" style="left:10px">Materiale</span><span class="v">Fe510</span></div>
<div class="prow" style="top:89.46px"><div class="abs" style="left:9px;top:0;width:81px;height:9px;background:#c6c6c6"></div><svg class="abs" style="left:1px;top:1.5px" width="7" height="7" viewBox="0 0 7 7"><rect x="0.5" y="0.5" width="6" height="6" fill="#fff" stroke="#4a4a4a" stroke-width="0.9"/><path d="M1.8,3.5H5.2M3.5,1.8V5.2" stroke="#111" stroke-width="0.9"/></svg><span class="n" style="left:10px">Carico lineare</span><span class="v">Nessuno; Globale</span></div>
<div class="prow" style="top:99.30px"><span class="n" style="left:10px">Variazione termica</span><span class="bx"></span><span class="v" style="left:108px">Nessuno</span></div>
<div class="prow" style="top:109.14px"><span class="n" style="left:10px">Sovraresistenza</span><span class="v" style="transform:scaleX(.885)">0</span></div>
<div class="prow" style="top:118.98px"><span class="n" style="left:10px">Sisma Z</span><span class="v">No</span></div>
<div class="prow" style="top:128.82px"><svg class="abs" style="left:1px;top:1.5px" width="7" height="7" viewBox="0 0 7 7"><rect x="0.5" y="0.5" width="6" height="6" fill="#fff" stroke="#4a4a4a" stroke-width="0.9"/><path d="M1.8,3.5H5.2M3.5,1.8V5.2" stroke="#111" stroke-width="0.9"/></svg><span class="n" style="left:10px">Cerniera iniziale</span><span class="v">No</span></div>
<div class="prow" style="top:138.66px"><svg class="abs" style="left:1px;top:1.5px" width="7" height="7" viewBox="0 0 7 7"><rect x="0.5" y="0.5" width="6" height="6" fill="#fff" stroke="#4a4a4a" stroke-width="0.9"/><path d="M1.8,3.5H5.2M3.5,1.8V5.2" stroke="#111" stroke-width="0.9"/></svg><span class="n" style="left:10px">Cerniera finale</span><span class="v">No</span></div>
<div class="prow" style="top:148.50px"><span class="n" style="left:10px">Forma</span><span class="v">Asse + Solido</span></div>
<div class="prow" style="top:158.34px"><svg class="abs" style="left:1px;top:1.5px" width="7" height="7" viewBox="0 0 7 7"><rect x="0.5" y="0.5" width="6" height="6" fill="#fff" stroke="#4a4a4a" stroke-width="0.9"/><path d="M1.8,3.5H5.2M3.5,1.8V5.2" stroke="#111" stroke-width="0.9"/></svg><span class="n" style="left:10px">Punto FEM iniziale</span><span class="v" style="transform:scaleX(.885)">1169.2; -981.1; 0</span></div>
<div class="prow" style="top:168.18px"><svg class="abs" style="left:1px;top:1.5px" width="7" height="7" viewBox="0 0 7 7"><rect x="0.5" y="0.5" width="6" height="6" fill="#fff" stroke="#4a4a4a" stroke-width="0.9"/><path d="M1.8,3.5H5.2M3.5,1.8V5.2" stroke="#111" stroke-width="0.9"/></svg><span class="n" style="left:10px">Punto FEM finale</span><span class="v" style="transform:scaleX(.885)">1169.2; -981.1; 214</span></div>
<div class="prow" style="top:178.02px"><span class="n" style="left:10px">Tirante</span><span class="v">No</span></div>
<div class="prow" style="top:187.86px"><span class="n" style="left:10px">Assi verifica</span><span class="v">Principali</span></div>
<div class="prow" style="top:197.70px"><svg class="abs" style="left:1px;top:1.5px" width="7" height="7" viewBox="0 0 7 7"><rect x="0.5" y="0.5" width="6" height="6" fill="#fff" stroke="#4a4a4a" stroke-width="0.9"/><path d="M1.8,3.5H5.2M3.5,1.8V5.2" stroke="#111" stroke-width="0.9"/></svg><span class="n" style="left:10px">Verifica compressione</span><span class="v">Default; Default</span></div>
<div class="prow" style="top:207.54px"><span class="n" style="left:10px">Verifica trazione</span><span class="v">Default; Default; ...</span></div>
  <div class="abs" style="left:90px;top:0;width:1px;height:208px;background:#d9d9d9"></div>
</div>
<!-- prop scrollbar -->
<div class="abs" style="left:778px;top:87px;width:10px;height:208px;background:#eeeeee"></div>
<div class="abs" style="left:781px;top:91px;border-left:2px solid transparent;border-right:2px solid transparent;border-bottom:3px solid #333;width:0;height:0"></div>
<div class="abs" style="left:781px;top:288px;border-left:2px solid transparent;border-right:2px solid transparent;border-top:3px solid #333;width:0;height:0"></div>
<div class="abs" style="left:779px;top:97px;width:9px;height:178px;background:linear-gradient(90deg,#f1f1f1,#d9d9d9);border:1px solid #9a9a9a;border-radius:1px"></div>
<div class="abs" style="left:781px;top:183px;width:5px;height:5px;background:repeating-linear-gradient(180deg,#7a7a7a 0 1px,transparent 1px 2px)"></div>
<!-- description -->
<div class="abs" style="left:599px;top:299px;width:189px;height:59px;background:#f0f0f0;border:1px solid #a9a9a9"></div>
<div class="abs" style="left:601px;top:301px;font-size:8.6px;line-height:10px;font-weight:bold;white-space:nowrap"><span class="sxb" style="transform:scaleX(.84)">Carico lineare</span></div>
<div class="abs" style="left:601px;top:310px;font-size:8.6px;line-height:10px;white-space:nowrap;color:#111"><span class="sx">Riferimento alla definizione di un carico lineare.</span></div>
<!-- Layer -->
<div class="phead" style="left:599px;top:364px;width:189px"><span class="sx">Layer</span><i style="left:171px"><svg width="8" height="8" viewBox="0 0 8 8"><rect x="0.3" y="0.3" width="7.4" height="7.4" fill="#bfc4cb" stroke="#aab0b9" stroke-width="0.5"/><path d="M1.5,6.5L3.5,4.5M2.5,2.5L5.5,5.5M3.5,1.5L6.5,4.5L5,5L3,3Z" stroke="#fff" stroke-width="0.9" fill="#fff"/></svg></i><i style="left:179px"><svg width="9" height="8" viewBox="0 0 9 8"><rect x="0.3" y="0.3" width="8.4" height="7.4" fill="#8f6a72" stroke="#7a5a62" stroke-width="0.6"/><path d="M2.5,2L6.5,6M6.5,2L2.5,6" stroke="#f4dada" stroke-width="1.3"/></svg></i></div>
<div class="abs" style="left:599px;top:374px;width:189px;height:82px;background:#fff;border:1px solid #c3c7cf;border-top:none">
<div class="lrow" style="top:1.5px"><span class="e"></span><span class="cb c"></span><span class="t">Tutto a quota...</span></div>
<div class="lrow" style="top:11.4px"><span class="e"></span><span class="cb c"></span><span class="t">Tutto a tronco...</span></div>
<div class="lrow" style="top:21.3px"><span class="abs" style="left:7px;top:5px;width:5px;height:1px;background:#bbb"></span><span class="cb c"></span><span class="t">Tutto a quota generica e tra piani</span></div>
<div class="lrow" style="top:31.2px"><span class="e"></span><span class="cb c"></span><span class="t">Travi in acciaio</span></div>
<div class="lrow" style="top:41.1px"><span class="e"></span><span class="cb c"></span><span class="t">Colonne in acciaio</span></div>
<div class="lrow" style="top:51.0px"><span class="e"></span><span class="cb c"></span><span class="t">Vincoli</span></div>
<div class="lrow" style="top:60.9px"><span class="e"></span><span class="cb "></span><span class="t">Linee</span></div>
</div>
<!-- Punto di vista -->
<div class="phead" style="left:599px;top:459px;width:189px"><span class="sx">Punto di vista</span><i style="left:171px"><svg width="8" height="8" viewBox="0 0 8 8"><rect x="0.3" y="0.3" width="7.4" height="7.4" fill="#bfc4cb" stroke="#aab0b9" stroke-width="0.5"/><path d="M1.5,6.5L3.5,4.5M2.5,2.5L5.5,5.5M3.5,1.5L6.5,4.5L5,5L3,3Z" stroke="#fff" stroke-width="0.9" fill="#fff"/></svg></i><i style="left:179px"><svg width="9" height="8" viewBox="0 0 9 8"><rect x="0.3" y="0.3" width="8.4" height="7.4" fill="#8f6a72" stroke="#7a5a62" stroke-width="0.6"/><path d="M2.5,2L6.5,6M6.5,2L2.5,6" stroke="#f4dada" stroke-width="1.3"/></svg></i></div>
<div class="abs" style="left:599px;top:469px;width:189px;height:134px;background:#000;overflow:hidden">
  <svg class="abs" style="left:0;top:0" width="189" height="134" viewBox="0 0 189 134">
    <g transform="translate(47.2,67.2)"><g transform="scale(1.0)" filter="url(#soft)">
<path d="M-2.4,-3.2 L-22.3,-9.0 L-21.6,-11.3 L-35.4,-10.4 L-24.2,-2.2 L-23.6,-4.6 L-3.6,1.2Z" fill="#117a1a"/>
<path d="M2.1,-3.0 L2.1,-22.0 L4.2,-22.0 L0.0,-35.5 L-4.2,-22.0 L-2.1,-22.0 L-2.1,-3.0Z" fill="#1616dc"/>
<path d="M4.7,-1.3 L14.5,-11.4 L16.0,-9.9 L19.0,-19.5 L9.5,-16.2 L11.0,-14.7 L1.3,-4.7Z" fill="#e01212"/>
<path d="M-5.4,-3.5 L0.5,-5.6 L5.4,-3.4 L5.4,3.4 L-0.5,5.6 L-5.4,3.2Z" fill="#ffffff"/>
<path d="M-5.4,-3.5 L-0.5,-1.2 L5.4,-3.4 M-0.5,-1.2 L-0.5,5.6" stroke="#c4c4c4" stroke-width="0.7" fill="none"/>
</g></g>
    <g stroke="#fff" stroke-width="1" fill="none">
      <circle cx="141.6" cy="67.2" r="37.7"/><circle cx="141.6" cy="67.2" r="19"/>
      <path d="M99,67.2H185M141.6,25V110"/>
      <path d="M141.6,67.2L112.5,59.5M141.6,67.2L157.5,52.5" stroke-width="1.6"/>
    </g>
    <g fill="#fff" font-family="Liberation Sans, sans-serif" font-size="8.5">
      <text x="141.5" y="48">Z</text><text x="157.5" y="60">X</text><text x="112" y="67.5">Y</text>
    </g>
  </svg>
</div>
<div class="abs" style="left:599px;top:603px;width:189px;height:14px;background:#f9f9f7"></div>
<!-- STATUS BAR -->
<div id="status" class="abs">
  <div class="abs" style="left:337px;top:1px;width:1px;height:9px;background:#cfccc0"></div>
  <div class="abs" style="left:478px;top:1px;width:1px;height:9px;background:#cfccc0"></div>
  <div class="abs" style="left:597px;top:1px;width:1px;height:9px;background:#cfccc0"></div>
  <span style="left:502px;">1520;743;0</span>
  <svg class="abs" style="left:576px;top:0px" width="10" height="10" viewBox="0 0 10 10"><path d="M2,4L5,1L8,4V8H2Z" fill="#e8862a"/><rect x="4" y="5" width="5" height="4" fill="#9bb4d6"/></svg>
  <div class="abs" style="left:603px;top:0;width:30px;height:12px;background:#f8f8f6;border-left:1px solid #d5d2c6;border-right:1px solid #d5d2c6"></div>
  <span style="left:611px">PICK</span>
  <span style="left:639px">ORTO</span>
  <div class="abs" style="left:666px;top:0;width:31px;height:12px;background:#f8f8f6;border-left:1px solid #d5d2c6;border-right:1px solid #d5d2c6"></div>
  <span style="left:668px;">OSNAP</span>
  <span style="left:703px">INFO</span>
  <span style="left:733px;">cm,daN,deg,°C,s</span>
</div>
</div>

</body></html>
